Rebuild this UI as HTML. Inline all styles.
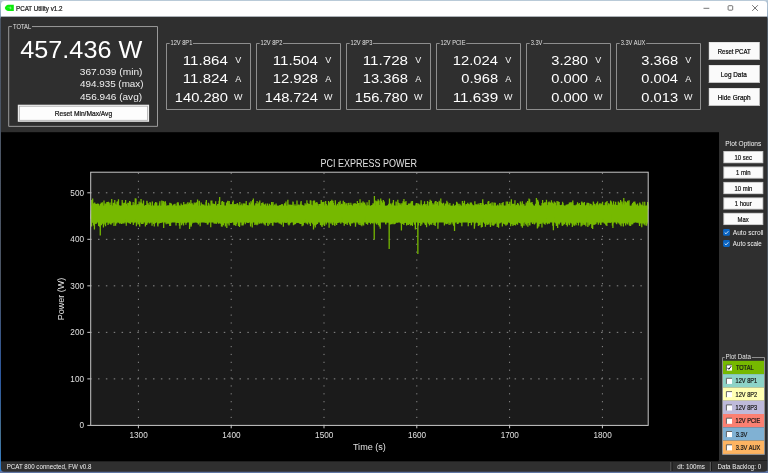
<!DOCTYPE html>
<html><head><meta charset="utf-8"><title>PCAT Utility v1.2</title>
<style>
*{box-sizing:border-box;margin:0;padding:0}
html,body{width:768px;height:473px;overflow:hidden;background:#2f2f2f}
svg{position:absolute;left:0;top:0;display:block;will-change:transform}
svg text{font-family:"Liberation Sans",sans-serif;white-space:pre}
</style></head><body>
<svg width="768" height="473" viewBox="0 0 768 473">
<defs><linearGradient id="dl" x1="0" y1="0" x2="0" y2="1"><stop offset="0" stop-color="#b4c6d6"/><stop offset="0.034" stop-color="#8aa4bc"/><stop offset="0.04" stop-color="#4c5666"/><stop offset="0.6" stop-color="#4a5464"/><stop offset="0.8" stop-color="#2c58a0"/><stop offset="0.92" stop-color="#46708e"/><stop offset="1" stop-color="#2b80dc"/></linearGradient><linearGradient id="dr" x1="0" y1="0" x2="0" y2="1"><stop offset="0" stop-color="#b4c6d6"/><stop offset="0.034" stop-color="#8aa4bc"/><stop offset="0.04" stop-color="#586470"/><stop offset="1" stop-color="#4c545e"/></linearGradient></defs>
<rect x="0" y="0" width="384" height="473" fill="url(#dl)"/>
<rect x="384" y="0" width="384" height="473" fill="url(#dr)"/>
<rect x="0" y="471" width="768" height="2" fill="#6076a4"/>
<rect x="0" y="0" width="768" height="1" fill="#b9cad8"/>
<path d="M1 16.5H767.1V468.7a3 3 0 0 1 -3 3H4a3 3 0 0 1 -3 -3Z" fill="#2f2f2f"/>
<path d="M1 16.5V4.5a3.5 3.5 0 0 1 3.5 -3.5H763.6a3.5 3.5 0 0 1 3.5 3.5V16.5Z" fill="#ffffff"/>
<path d="M7.9 4.8H13.8V11H7.9C6.3 10.7 5.2 9.6 4.8 8.1C5.1 6.7 6.3 5.4 7.9 4.8Z" fill="#0bea0b"/>
<ellipse cx="10.4" cy="7.9" rx="1.0" ry="1.3" fill="#8af58a" opacity="0.8" transform="rotate(-25 10.4 7.9)"/>
<ellipse cx="8.2" cy="7.3" rx="0.8" ry="0.5" fill="#6af06a" opacity="0.7"/>
<text transform="translate(16.00,10.90) scale(0.842,1)" font-size="7.4" fill="#222" stroke="#111" stroke-width="0.22">PCAT Utility v1.2</text>
<g stroke="#3a3a3a" stroke-width="0.7" fill="none"><path d="M703.5 8.3H709.3"/><rect x="728.1" y="5.7" width="4.6" height="4.5" rx="0.8"/><path d="M752.2 5.2L757.9 10.9M757.9 5.2L752.2 10.9"/></g>
<path d="M11.9 26.55H8.7V126.35H157.5V26.55H32.0" fill="none" stroke="#9a9a9a" stroke-width="1"/>
<text transform="translate(12.98,28.80) scale(0.769,1)" font-size="7.6" fill="#e2e2e2">TOTAL</text>
<text transform="translate(20.30,58.00) scale(1.051,1)" font-size="24" fill="#ffffff">457.436 W</text>
<text transform="translate(79.79,74.80) scale(1.058,1)" font-size="9.6" fill="#f0f0f0">367.039 (min)</text>
<text transform="translate(80.00,87.40) scale(1.028,1)" font-size="9.6" fill="#f0f0f0">494.935 (max)</text>
<text transform="translate(80.00,100.00) scale(1.049,1)" font-size="9.6" fill="#f0f0f0">456.946 (avg)</text>
<rect x="17.8" y="104.7" width="131.3" height="17.1" fill="#ececec"/>
<rect x="19.0" y="105.9" width="128.9" height="14.7" fill="#a6a6a6"/>
<rect x="19.7" y="106.6" width="127.5" height="13.3" fill="#fdfdfd"/>
<text transform="translate(54.77,116.00) scale(0.898,1)" font-size="7.4" fill="#111" stroke="#111" stroke-width="0.22">Reset Min/Max/Avg</text>
<path d="M169.7 43.5H166.5V109.5H250.5V43.5H193.0" fill="none" stroke="#8e8e8e" stroke-width="1"/>
<text transform="translate(170.47,45.10) scale(0.793,1)" font-size="7.2" fill="#e2e2e2">12V 8P1</text>
<text transform="translate(182.76,64.70) scale(1.138,1)" font-size="13.3" fill="#ffffff">11.864</text>
<text transform="translate(235.31,62.80) scale(1.000,1)" font-size="9.0" fill="#f4f4f4">V</text>
<text transform="translate(182.76,83.40) scale(1.138,1)" font-size="13.3" fill="#ffffff">11.824</text>
<text transform="translate(235.31,81.50) scale(1.000,1)" font-size="9.0" fill="#f4f4f4">A</text>
<text transform="translate(174.80,102.10) scale(1.107,1)" font-size="13.3" fill="#ffffff">140.280</text>
<text transform="translate(234.05,100.20) scale(1.000,1)" font-size="9.0" fill="#f4f4f4">W</text>
<path d="M259.7 43.5H256.5V109.5H340.5V43.5H283.0" fill="none" stroke="#8e8e8e" stroke-width="1"/>
<text transform="translate(260.47,45.10) scale(0.793,1)" font-size="7.2" fill="#e2e2e2">12V 8P2</text>
<text transform="translate(272.76,64.70) scale(1.138,1)" font-size="13.3" fill="#ffffff">11.504</text>
<text transform="translate(325.31,62.80) scale(1.000,1)" font-size="9.0" fill="#f4f4f4">V</text>
<text transform="translate(272.79,83.40) scale(1.113,1)" font-size="13.3" fill="#ffffff">12.928</text>
<text transform="translate(325.31,81.50) scale(1.000,1)" font-size="9.0" fill="#f4f4f4">A</text>
<text transform="translate(264.80,102.10) scale(1.105,1)" font-size="13.3" fill="#ffffff">148.724</text>
<text transform="translate(324.05,100.20) scale(1.000,1)" font-size="9.0" fill="#f4f4f4">W</text>
<path d="M349.7 43.5H346.5V109.5H430.5V43.5H373.0" fill="none" stroke="#8e8e8e" stroke-width="1"/>
<text transform="translate(350.47,45.10) scale(0.793,1)" font-size="7.2" fill="#e2e2e2">12V 8P3</text>
<text transform="translate(362.76,64.70) scale(1.142,1)" font-size="13.3" fill="#ffffff">11.728</text>
<text transform="translate(415.31,62.80) scale(1.000,1)" font-size="9.0" fill="#f4f4f4">V</text>
<text transform="translate(362.79,83.40) scale(1.113,1)" font-size="13.3" fill="#ffffff">13.368</text>
<text transform="translate(415.31,81.50) scale(1.000,1)" font-size="9.0" fill="#f4f4f4">A</text>
<text transform="translate(354.80,102.10) scale(1.107,1)" font-size="13.3" fill="#ffffff">156.780</text>
<text transform="translate(414.05,100.20) scale(1.000,1)" font-size="9.0" fill="#f4f4f4">W</text>
<path d="M439.7 43.5H436.5V109.5H520.5V43.5H466.2" fill="none" stroke="#8e8e8e" stroke-width="1"/>
<text transform="translate(440.47,45.10) scale(0.793,1)" font-size="7.2" fill="#e2e2e2">12V PCIE</text>
<text transform="translate(452.79,64.70) scale(1.109,1)" font-size="13.3" fill="#ffffff">12.024</text>
<text transform="translate(505.31,62.80) scale(1.000,1)" font-size="9.0" fill="#f4f4f4">V</text>
<text transform="translate(461.31,83.40) scale(1.106,1)" font-size="13.3" fill="#ffffff">0.968</text>
<text transform="translate(505.31,81.50) scale(1.000,1)" font-size="9.0" fill="#f4f4f4">A</text>
<text transform="translate(452.76,102.10) scale(1.144,1)" font-size="13.3" fill="#ffffff">11.639</text>
<text transform="translate(504.05,100.20) scale(1.000,1)" font-size="9.0" fill="#f4f4f4">W</text>
<path d="M529.7 43.5H526.5V109.5H610.5V43.5H543.3" fill="none" stroke="#8e8e8e" stroke-width="1"/>
<text transform="translate(530.67,45.10) scale(0.793,1)" font-size="7.2" fill="#e2e2e2">3.3V</text>
<text transform="translate(551.31,64.70) scale(1.104,1)" font-size="13.3" fill="#ffffff">3.280</text>
<text transform="translate(595.31,62.80) scale(1.000,1)" font-size="9.0" fill="#f4f4f4">V</text>
<text transform="translate(551.31,83.40) scale(1.104,1)" font-size="13.3" fill="#ffffff">0.000</text>
<text transform="translate(595.31,81.50) scale(1.000,1)" font-size="9.0" fill="#f4f4f4">A</text>
<text transform="translate(551.31,102.10) scale(1.104,1)" font-size="13.3" fill="#ffffff">0.000</text>
<text transform="translate(594.05,100.20) scale(1.000,1)" font-size="9.0" fill="#f4f4f4">W</text>
<path d="M619.7 43.5H616.5V109.5H700.5V43.5H646.2" fill="none" stroke="#8e8e8e" stroke-width="1"/>
<text transform="translate(620.67,45.10) scale(0.793,1)" font-size="7.2" fill="#e2e2e2">3.3V AUX</text>
<text transform="translate(641.31,64.70) scale(1.106,1)" font-size="13.3" fill="#ffffff">3.368</text>
<text transform="translate(685.31,62.80) scale(1.000,1)" font-size="9.0" fill="#f4f4f4">V</text>
<text transform="translate(641.31,83.40) scale(1.102,1)" font-size="13.3" fill="#ffffff">0.004</text>
<text transform="translate(685.31,81.50) scale(1.000,1)" font-size="9.0" fill="#f4f4f4">A</text>
<text transform="translate(641.31,102.10) scale(1.106,1)" font-size="13.3" fill="#ffffff">0.013</text>
<text transform="translate(684.05,100.20) scale(1.000,1)" font-size="9.0" fill="#f4f4f4">W</text>
<rect x="708.8" y="42" width="51" height="18" fill="#dedede"/>
<rect x="708.8" y="59" width="51" height="1" fill="#bcbcbc"/>
<rect x="709.6" y="42.8" width="49.4" height="16.3" fill="#fafafa"/>
<text transform="translate(717.72,54.00) scale(0.814,1)" font-size="7.4" fill="#000" stroke="#111" stroke-width="0.22">Reset PCAT</text>
<rect x="708.8" y="65" width="51" height="18" fill="#dedede"/>
<rect x="708.8" y="82" width="51" height="1" fill="#bcbcbc"/>
<rect x="709.6" y="65.8" width="49.4" height="16.3" fill="#fafafa"/>
<text transform="translate(720.79,77.20) scale(0.866,1)" font-size="7.4" fill="#000" stroke="#111" stroke-width="0.22">Log Data</text>
<rect x="708.8" y="88" width="51" height="18" fill="#dedede"/>
<rect x="708.8" y="105" width="51" height="1" fill="#bcbcbc"/>
<rect x="709.6" y="88.8" width="49.4" height="16.3" fill="#fafafa"/>
<text transform="translate(717.68,100.40) scale(0.873,1)" font-size="7.4" fill="#000" stroke="#111" stroke-width="0.22">Hide Graph</text>
<rect x="1" y="132.2" width="718.0" height="329.1" fill="#000000"/>
<rect x="90.7" y="172.2" width="557.5" height="253.2" fill="#1b1b1b"/>
<line x1="90.9" y1="378.88" x2="648.2" y2="378.88" stroke="#8c8c8c" stroke-width="1" stroke-dasharray="1.5 6.36" stroke-dashoffset="0.75"/>
<line x1="90.9" y1="332.36" x2="648.2" y2="332.36" stroke="#8c8c8c" stroke-width="1" stroke-dasharray="1.5 6.36" stroke-dashoffset="0.75"/>
<line x1="90.9" y1="285.84" x2="648.2" y2="285.84" stroke="#8c8c8c" stroke-width="1" stroke-dasharray="1.5 6.36" stroke-dashoffset="0.75"/>
<line x1="90.9" y1="239.32" x2="648.2" y2="239.32" stroke="#8c8c8c" stroke-width="1" stroke-dasharray="1.5 6.36" stroke-dashoffset="0.75"/>
<line x1="90.9" y1="192.80" x2="648.2" y2="192.80" stroke="#8c8c8c" stroke-width="1" stroke-dasharray="1.5 6.36" stroke-dashoffset="0.75"/>
<line x1="138.40" y1="425.29999999999995" x2="138.40" y2="172.2" stroke="#8c8c8c" stroke-width="1" stroke-dasharray="1.2 6.67" stroke-dashoffset="0.6"/>
<line x1="231.20" y1="425.29999999999995" x2="231.20" y2="172.2" stroke="#8c8c8c" stroke-width="1" stroke-dasharray="1.2 6.67" stroke-dashoffset="0.6"/>
<line x1="324.00" y1="425.29999999999995" x2="324.00" y2="172.2" stroke="#8c8c8c" stroke-width="1" stroke-dasharray="1.2 6.67" stroke-dashoffset="0.6"/>
<line x1="416.80" y1="425.29999999999995" x2="416.80" y2="172.2" stroke="#8c8c8c" stroke-width="1" stroke-dasharray="1.2 6.67" stroke-dashoffset="0.6"/>
<line x1="509.60" y1="425.29999999999995" x2="509.60" y2="172.2" stroke="#8c8c8c" stroke-width="1" stroke-dasharray="1.2 6.67" stroke-dashoffset="0.6"/>
<line x1="602.40" y1="425.29999999999995" x2="602.40" y2="172.2" stroke="#8c8c8c" stroke-width="1" stroke-dasharray="1.2 6.67" stroke-dashoffset="0.6"/>
<rect x="91" y="205.6" width="557" height="16.9" fill="#76b900"/>
<path d="M91.00 218.7L91.09 215.9L91.19 214.4L91.28 213.9L91.37 210.4L91.46 218.7L91.56 221.5L91.65 226.5L91.74 200.0L91.84 211.5L91.93 218.8L92.02 223.1L92.11 220.4L92.21 213.8L92.30 213.5L92.39 212.3L92.49 214.6L92.58 220.3L92.67 198.6L92.76 209.0L92.86 217.4L92.95 221.5L93.04 210.6L93.14 213.8L93.23 203.2L93.32 220.0L93.41 209.7L93.51 214.8L93.60 225.4L93.69 221.1L93.78 225.2L93.88 203.4L93.97 222.0L94.06 222.4L94.16 205.8L94.25 212.4L94.34 220.5L94.43 229.5L94.53 223.3L94.62 218.0L94.71 202.4L94.81 206.5L94.90 223.0L94.99 208.0L95.08 221.1L95.18 219.0L95.27 208.2L95.36 221.6L95.46 223.9L95.55 212.0L95.64 221.1L95.73 212.4L95.83 211.0L95.92 222.1L96.01 203.8L96.11 221.8L96.20 207.0L96.29 203.9L96.38 206.6L96.48 223.6L96.57 222.4L96.66 209.3L96.76 217.8L96.85 220.5L96.94 220.9L97.03 220.3L97.13 210.6L97.22 220.6L97.31 204.1L97.41 218.3L97.50 213.6L97.59 216.0L97.68 210.6L97.78 203.4L97.87 204.4L97.96 214.1L98.06 221.2L98.15 204.3L98.24 208.6L98.33 210.6L98.43 214.1L98.52 204.1L98.61 226.0L98.71 205.5L98.80 209.2L98.89 207.6L98.98 218.5L99.08 209.1L99.17 214.4L99.26 215.6L99.36 212.6L99.45 209.3L99.54 226.8L99.63 209.8L99.73 210.8L99.82 209.6L99.91 214.4L100.00 208.6L100.10 225.8L100.19 220.9L100.28 235.5L100.38 204.1L100.47 217.3L100.56 209.4L100.65 218.1L100.75 206.2L100.84 213.4L100.93 210.9L101.03 223.4L101.12 202.8L101.21 206.9L101.30 215.9L101.40 225.3L101.49 205.6L101.58 207.3L101.68 221.4L101.77 214.8L101.86 214.1L101.95 212.4L102.05 205.9L102.14 203.5L102.23 223.7L102.33 202.2L102.42 211.1L102.51 217.7L102.60 222.0L102.70 210.9L102.79 218.8L102.88 218.9L102.98 213.9L103.07 212.6L103.16 206.2L103.25 208.7L103.35 218.6L103.44 227.5L103.53 220.1L103.63 220.3L103.72 210.6L103.81 210.9L103.90 208.9L104.00 200.6L104.09 206.2L104.18 224.4L104.28 203.6L104.37 219.9L104.46 208.6L104.55 206.3L104.65 219.4L104.74 207.4L104.83 211.2L104.92 215.5L105.02 206.1L105.11 212.2L105.20 206.0L105.30 206.0L105.39 214.2L105.48 212.1L105.57 226.3L105.67 203.4L105.76 219.4L105.85 216.9L105.95 222.4L106.04 213.8L106.13 213.0L106.22 208.3L106.32 222.5L106.41 221.3L106.50 208.7L106.60 214.1L106.69 212.7L106.78 220.5L106.87 202.0L106.97 217.0L107.06 217.1L107.15 211.1L107.25 211.1L107.34 206.1L107.43 212.2L107.52 214.9L107.62 216.1L107.71 207.0L107.80 214.4L107.90 201.9L107.99 214.8L108.08 225.1L108.17 203.1L108.27 214.5L108.36 209.7L108.45 201.7L108.55 221.7L108.64 219.9L108.73 214.5L108.82 217.4L108.92 209.0L109.01 223.4L109.10 220.3L109.20 214.6L109.29 214.7L109.38 212.1L109.47 209.5L109.57 214.2L109.66 211.7L109.75 205.2L109.85 203.4L109.94 205.2L110.03 202.5L110.12 215.7L110.22 221.7L110.31 219.5L110.40 224.0L110.50 209.1L110.59 220.2L110.68 215.8L110.77 220.5L110.87 205.1L110.96 224.8L111.05 213.3L111.14 211.7L111.24 219.6L111.33 223.4L111.42 214.9L111.52 221.6L111.61 219.5L111.70 199.0L111.79 203.4L111.89 203.0L111.98 214.2L112.07 216.0L112.17 215.6L112.26 223.2L112.35 208.3L112.44 215.6L112.54 209.2L112.63 220.3L112.72 209.1L112.82 206.4L112.91 207.2L113.00 217.7L113.09 216.8L113.19 206.8L113.28 216.2L113.37 209.0L113.47 209.9L113.56 202.7L113.65 208.8L113.74 218.9L113.84 206.9L113.93 213.4L114.02 226.1L114.12 208.5L114.21 216.8L114.30 218.1L114.39 212.1L114.49 217.0L114.58 204.2L114.67 210.0L114.77 200.1L114.86 207.8L114.95 219.4L115.04 219.9L115.14 215.1L115.23 203.6L115.32 217.5L115.42 212.2L115.51 204.7L115.60 225.7L115.69 211.3L115.79 204.5L115.88 222.3L115.97 213.4L116.06 206.6L116.16 213.6L116.25 214.4L116.34 219.4L116.44 211.5L116.53 209.3L116.62 216.6L116.71 223.6L116.81 221.1L116.90 206.6L116.99 202.4L117.09 201.8L117.18 221.3L117.27 215.2L117.36 202.8L117.46 201.4L117.55 213.8L117.64 205.4L117.74 209.1L117.83 212.7L117.92 217.9L118.01 221.1L118.11 215.8L118.20 220.7L118.29 214.6L118.39 211.2L118.48 199.3L118.57 220.3L118.66 219.5L118.76 212.8L118.85 217.0L118.94 209.1L119.04 213.6L119.13 222.9L119.22 214.8L119.31 205.6L119.41 222.3L119.50 214.6L119.59 208.8L119.69 221.6L119.78 223.8L119.87 212.8L119.96 217.7L120.06 216.8L120.15 207.6L120.24 222.6L120.34 209.0L120.43 222.3L120.52 215.4L120.61 212.9L120.71 208.3L120.80 212.5L120.89 206.2L120.99 217.4L121.08 221.9L121.17 223.4L121.26 215.0L121.36 217.7L121.45 206.1L121.54 209.3L121.64 223.9L121.73 206.2L121.82 217.2L121.91 207.0L122.01 214.2L122.10 209.9L122.19 200.1L122.28 216.5L122.38 207.3L122.47 214.1L122.56 202.6L122.66 217.5L122.75 217.8L122.84 214.5L122.93 223.5L123.03 214.0L123.12 207.1L123.21 208.2L123.31 205.1L123.40 212.7L123.49 217.2L123.58 212.2L123.68 204.4L123.77 206.1L123.86 220.0L123.96 203.0L124.05 223.5L124.14 208.8L124.23 210.1L124.33 206.2L124.42 212.8L124.51 219.1L124.61 204.1L124.70 214.7L124.79 209.7L124.88 219.7L124.98 208.1L125.07 210.0L125.16 202.3L125.26 213.5L125.35 213.8L125.44 218.7L125.53 213.3L125.63 200.0L125.72 215.6L125.81 214.0L125.91 217.5L126.00 217.9L126.09 224.1L126.18 223.4L126.28 225.8L126.37 203.7L126.46 222.9L126.56 219.0L126.65 219.9L126.74 222.2L126.83 220.8L126.93 206.6L127.02 221.1L127.11 215.0L127.20 215.6L127.30 219.8L127.39 210.3L127.48 220.3L127.58 220.2L127.67 217.2L127.76 214.4L127.85 202.7L127.95 210.0L128.04 213.8L128.13 215.5L128.23 214.1L128.32 220.2L128.41 217.4L128.50 208.0L128.60 202.8L128.69 219.8L128.78 207.7L128.88 223.0L128.97 209.7L129.06 223.2L129.15 219.4L129.25 218.7L129.34 210.6L129.43 206.7L129.53 212.1L129.62 201.1L129.71 218.0L129.80 213.7L129.90 206.3L129.99 218.0L130.08 217.1L130.18 214.6L130.27 211.1L130.36 224.0L130.45 201.7L130.55 206.3L130.64 216.5L130.73 208.6L130.83 211.9L130.92 220.9L131.01 220.2L131.10 211.4L131.20 210.8L131.29 219.0L131.38 208.1L131.48 218.0L131.57 214.3L131.66 206.5L131.75 218.5L131.85 205.3L131.94 222.0L132.03 209.9L132.13 216.9L132.22 206.7L132.31 220.1L132.40 219.7L132.50 221.6L132.59 206.2L132.68 209.2L132.78 206.7L132.87 219.0L132.96 213.5L133.05 208.8L133.15 202.0L133.24 213.9L133.33 225.1L133.42 208.6L133.52 224.0L133.61 205.4L133.70 207.1L133.80 208.3L133.89 206.2L133.98 214.0L134.07 222.8L134.17 218.7L134.26 208.0L134.35 204.7L134.45 210.4L134.54 218.4L134.63 212.4L134.72 205.6L134.82 217.6L134.91 202.7L135.00 219.6L135.10 213.5L135.19 212.5L135.28 198.2L135.37 207.2L135.47 206.8L135.56 217.1L135.65 212.7L135.75 205.1L135.84 220.7L135.93 221.5L136.02 198.5L136.12 211.0L136.21 205.5L136.30 219.1L136.40 226.2L136.49 221.3L136.58 215.8L136.67 210.9L136.77 216.7L136.86 213.4L136.95 221.4L137.05 206.6L137.14 207.4L137.23 216.5L137.32 207.8L137.42 207.7L137.51 204.7L137.60 204.7L137.70 216.6L137.79 210.1L137.88 214.3L137.97 213.6L138.07 224.4L138.16 205.9L138.25 213.2L138.34 208.8L138.44 220.6L138.53 224.1L138.62 215.1L138.72 224.3L138.81 221.6L138.90 219.0L138.99 222.3L139.09 201.5L139.18 205.9L139.27 214.8L139.37 209.3L139.46 211.3L139.55 207.5L139.64 226.6L139.74 225.8L139.83 219.7L139.92 221.6L140.02 203.9L140.11 218.5L140.20 211.1L140.29 204.5L140.39 222.3L140.48 202.8L140.57 213.7L140.67 202.5L140.76 203.4L140.85 213.2L140.94 212.2L141.04 198.9L141.13 221.0L141.22 206.0L141.32 221.1L141.41 215.7L141.50 202.5L141.59 223.9L141.69 207.2L141.78 223.7L141.87 220.8L141.97 217.4L142.06 220.4L142.15 204.1L142.24 218.5L142.34 214.9L142.43 221.0L142.52 205.5L142.62 219.0L142.71 203.4L142.80 217.2L142.89 224.1L142.99 211.6L143.08 205.3L143.17 223.4L143.27 216.0L143.36 219.6L143.45 205.0L143.54 200.5L143.64 207.5L143.73 214.0L143.82 221.6L143.91 213.4L144.01 211.4L144.10 209.5L144.19 206.0L144.29 214.2L144.38 221.4L144.47 205.9L144.56 217.1L144.66 214.3L144.75 210.4L144.84 220.8L144.94 211.6L145.03 211.0L145.12 208.1L145.21 211.0L145.31 222.2L145.40 226.4L145.49 214.8L145.59 218.6L145.68 205.1L145.77 215.3L145.86 220.3L145.96 221.6L146.05 217.1L146.14 212.3L146.24 211.8L146.33 222.2L146.42 220.1L146.51 222.4L146.61 210.5L146.70 224.9L146.79 218.8L146.89 200.8L146.98 207.1L147.07 201.3L147.16 206.3L147.26 223.5L147.35 217.4L147.44 216.5L147.54 221.0L147.63 220.6L147.72 208.4L147.81 219.6L147.91 216.8L148.00 212.7L148.09 217.9L148.19 203.2L148.28 216.0L148.37 208.5L148.46 208.5L148.56 208.8L148.65 216.5L148.74 214.8L148.84 208.8L148.93 220.6L149.02 211.4L149.11 220.6L149.21 212.9L149.30 223.6L149.39 207.5L149.49 204.9L149.58 221.2L149.67 210.2L149.76 223.1L149.86 220.8L149.95 202.1L150.04 208.9L150.13 219.4L150.23 205.9L150.32 205.9L150.41 202.7L150.51 215.9L150.60 221.5L150.69 208.6L150.78 211.2L150.88 218.7L150.97 222.2L151.06 221.8L151.16 219.9L151.25 220.5L151.34 209.1L151.43 206.7L151.53 220.9L151.62 207.2L151.71 218.6L151.81 217.1L151.90 218.9L151.99 222.6L152.08 225.8L152.18 208.5L152.27 203.7L152.36 201.4L152.46 220.9L152.55 206.0L152.64 205.0L152.73 219.9L152.83 215.7L152.92 215.7L153.01 218.9L153.11 221.1L153.20 216.8L153.29 209.6L153.38 217.8L153.48 214.3L153.57 223.9L153.66 213.8L153.76 207.1L153.85 216.3L153.94 223.8L154.03 213.2L154.13 213.3L154.22 218.7L154.31 226.5L154.41 208.7L154.50 219.4L154.59 215.3L154.68 209.1L154.78 212.3L154.87 203.3L154.96 213.5L155.06 216.8L155.15 205.3L155.24 208.2L155.33 220.9L155.43 223.3L155.52 216.7L155.61 202.1L155.70 218.5L155.80 209.5L155.89 212.4L155.98 215.7L156.08 207.9L156.17 214.2L156.26 207.9L156.35 203.9L156.45 203.3L156.54 218.3L156.63 212.3L156.73 202.6L156.82 211.8L156.91 215.4L157.00 219.0L157.10 209.3L157.19 219.4L157.28 216.4L157.38 219.7L157.47 222.4L157.56 208.5L157.65 225.4L157.75 212.9L157.84 218.4L157.93 226.4L158.03 222.5L158.12 216.1L158.21 208.7L158.30 214.3L158.40 217.0L158.49 209.9L158.58 214.7L158.68 209.3L158.77 205.8L158.86 217.2L158.95 209.6L159.05 223.1L159.14 206.8L159.23 223.6L159.33 211.7L159.42 214.5L159.51 203.2L159.60 208.8L159.70 220.5L159.79 207.9L159.88 201.2L159.98 222.9L160.07 214.4L160.16 217.6L160.25 205.9L160.35 217.3L160.44 210.3L160.53 221.4L160.62 212.5L160.72 222.4L160.81 217.2L160.90 216.2L161.00 212.5L161.09 223.1L161.18 210.3L161.27 216.4L161.37 221.4L161.46 218.7L161.55 219.7L161.65 216.1L161.74 222.0L161.83 200.4L161.92 218.6L162.02 217.1L162.11 207.2L162.20 212.0L162.30 211.1L162.39 204.8L162.48 203.2L162.57 206.1L162.67 208.3L162.76 220.5L162.85 220.4L162.95 207.0L163.04 218.0L163.13 220.0L163.22 200.9L163.32 206.4L163.41 207.2L163.50 208.7L163.60 205.6L163.69 228.1L163.78 205.9L163.87 217.3L163.97 201.8L164.06 219.2L164.15 217.9L164.25 204.5L164.34 217.7L164.43 219.8L164.52 204.8L164.62 216.4L164.71 207.3L164.80 209.3L164.90 209.1L164.99 220.6L165.08 217.1L165.17 213.3L165.27 216.7L165.36 201.2L165.45 218.8L165.55 209.0L165.64 220.2L165.73 203.3L165.82 222.3L165.92 219.0L166.01 220.7L166.10 221.7L166.19 224.2L166.29 216.7L166.38 212.5L166.47 218.0L166.57 208.0L166.66 213.1L166.75 214.3L166.84 206.4L166.94 212.0L167.03 214.5L167.12 215.7L167.22 209.3L167.31 210.5L167.40 214.1L167.49 215.2L167.59 223.8L167.68 211.0L167.77 217.8L167.87 206.2L167.96 205.4L168.05 219.6L168.14 219.6L168.24 208.6L168.33 209.9L168.42 213.1L168.52 223.7L168.61 205.6L168.70 208.1L168.79 218.3L168.89 221.2L168.98 218.9L169.07 212.9L169.17 208.5L169.26 206.7L169.35 205.3L169.44 206.9L169.54 205.8L169.63 220.9L169.72 226.1L169.82 202.8L169.91 221.2L170.00 203.9L170.09 210.3L170.19 203.0L170.28 222.8L170.37 211.3L170.47 221.3L170.56 226.1L170.65 218.2L170.74 215.9L170.84 211.6L170.93 223.0L171.02 210.2L171.12 221.9L171.21 205.1L171.30 221.5L171.39 203.6L171.49 219.6L171.58 218.7L171.67 210.0L171.76 214.3L171.86 216.3L171.95 211.7L172.04 209.6L172.14 220.8L172.23 205.9L172.32 216.5L172.41 216.8L172.51 206.3L172.60 209.1L172.69 212.8L172.79 217.6L172.88 213.3L172.97 209.6L173.06 209.6L173.16 219.7L173.25 204.7L173.34 215.0L173.44 204.8L173.53 214.6L173.62 221.8L173.71 217.1L173.81 216.8L173.90 219.9L173.99 204.2L174.09 210.7L174.18 215.6L174.27 215.9L174.36 213.8L174.46 206.1L174.55 205.4L174.64 207.9L174.74 208.3L174.83 214.4L174.92 216.5L175.01 203.7L175.11 220.7L175.20 215.1L175.29 207.1L175.39 209.6L175.48 210.8L175.57 208.0L175.66 208.2L175.76 215.2L175.85 221.3L175.94 208.3L176.04 225.6L176.13 210.8L176.22 221.8L176.31 214.9L176.41 222.8L176.50 223.1L176.59 214.2L176.69 215.9L176.78 214.1L176.87 214.1L176.96 215.9L177.06 221.4L177.15 202.8L177.24 208.7L177.33 218.6L177.43 205.7L177.52 214.3L177.61 206.3L177.71 208.5L177.80 213.9L177.89 222.8L177.98 202.0L178.08 210.0L178.17 215.9L178.26 223.0L178.36 203.2L178.45 220.2L178.54 204.7L178.63 205.6L178.73 205.4L178.82 216.8L178.91 215.8L179.01 218.5L179.10 215.7L179.19 215.6L179.28 205.8L179.38 225.7L179.47 216.2L179.56 218.2L179.66 216.5L179.75 213.5L179.84 210.6L179.93 228.7L180.03 221.7L180.12 209.6L180.21 211.8L180.31 217.3L180.40 209.0L180.49 220.0L180.58 207.8L180.68 222.2L180.77 217.8L180.86 210.4L180.96 213.9L181.05 218.6L181.14 203.4L181.23 206.9L181.33 204.9L181.42 207.5L181.51 208.1L181.61 225.3L181.70 205.7L181.79 205.9L181.88 207.2L181.98 208.5L182.07 215.2L182.16 205.2L182.26 223.4L182.35 210.3L182.44 215.0L182.53 215.6L182.63 217.1L182.72 207.4L182.81 205.6L182.91 210.7L183.00 222.3L183.09 215.3L183.18 204.8L183.28 222.0L183.37 204.7L183.46 220.4L183.55 225.5L183.65 217.1L183.74 201.9L183.83 214.4L183.93 209.1L184.02 222.4L184.11 212.8L184.20 220.8L184.30 215.9L184.39 213.4L184.48 212.1L184.58 207.5L184.67 211.9L184.76 204.2L184.85 216.8L184.95 219.1L185.04 221.5L185.13 222.4L185.23 210.4L185.32 216.9L185.41 204.6L185.50 206.5L185.60 218.9L185.69 206.5L185.78 204.7L185.88 224.7L185.97 214.8L186.06 214.4L186.15 203.7L186.25 203.9L186.34 217.8L186.43 222.8L186.53 222.6L186.62 211.2L186.71 206.1L186.80 212.4L186.90 205.0L186.99 216.2L187.08 221.2L187.18 216.7L187.27 218.7L187.36 218.1L187.45 212.8L187.55 218.9L187.64 211.8L187.73 203.1L187.83 202.3L187.92 214.1L188.01 213.6L188.10 207.0L188.20 220.5L188.29 221.7L188.38 207.8L188.47 221.3L188.57 207.8L188.66 206.1L188.75 217.0L188.85 218.6L188.94 204.0L189.03 206.2L189.12 220.6L189.22 207.8L189.31 213.8L189.40 202.5L189.50 222.1L189.59 229.0L189.68 211.8L189.77 205.1L189.87 225.3L189.96 211.9L190.05 214.6L190.15 212.5L190.24 212.5L190.33 211.8L190.42 211.1L190.52 203.9L190.61 218.4L190.70 218.5L190.80 207.3L190.89 200.0L190.98 205.5L191.07 226.8L191.17 209.2L191.26 214.4L191.35 225.7L191.45 212.6L191.54 222.3L191.63 204.8L191.72 224.1L191.82 207.0L191.91 213.9L192.00 207.7L192.10 223.2L192.19 203.3L192.28 216.1L192.37 217.4L192.47 207.2L192.56 220.9L192.65 218.4L192.75 211.0L192.84 204.6L192.93 219.9L193.02 212.8L193.12 207.9L193.21 208.8L193.30 220.3L193.40 205.3L193.49 220.4L193.58 215.7L193.67 210.0L193.77 215.7L193.86 222.8L193.95 221.3L194.05 213.5L194.14 216.8L194.23 202.4L194.32 221.8L194.42 206.7L194.51 208.8L194.60 216.8L194.69 205.6L194.79 213.9L194.88 213.8L194.97 212.2L195.07 219.7L195.16 216.5L195.25 207.3L195.34 216.1L195.44 209.2L195.53 203.2L195.62 208.5L195.72 205.7L195.81 219.3L195.90 215.2L195.99 202.6L196.09 222.3L196.18 221.9L196.27 217.4L196.37 212.0L196.46 215.6L196.55 214.3L196.64 202.3L196.74 222.3L196.83 217.5L196.92 217.8L197.02 222.3L197.11 215.9L197.20 204.8L197.29 211.6L197.39 207.0L197.48 203.3L197.57 199.6L197.67 215.2L197.76 222.9L197.85 207.2L197.94 218.6L198.04 206.7L198.13 214.8L198.22 222.4L198.32 224.5L198.41 218.3L198.50 212.4L198.59 209.1L198.69 220.1L198.78 208.5L198.87 217.5L198.97 217.8L199.06 203.8L199.15 201.1L199.24 203.8L199.34 200.7L199.43 216.7L199.52 216.7L199.62 209.0L199.71 214.4L199.80 223.2L199.89 213.8L199.99 211.5L200.08 217.3L200.17 226.2L200.26 211.8L200.36 211.4L200.45 213.4L200.54 217.2L200.64 222.4L200.73 211.8L200.82 217.7L200.91 205.7L201.01 205.9L201.10 215.6L201.19 202.4L201.29 215.3L201.38 205.7L201.47 214.1L201.56 218.8L201.66 204.3L201.75 209.3L201.84 208.5L201.94 209.5L202.03 205.2L202.12 214.7L202.21 218.8L202.31 213.4L202.40 216.3L202.49 206.9L202.59 204.3L202.68 210.3L202.77 218.3L202.86 218.2L202.96 221.6L203.05 205.8L203.14 208.5L203.24 221.1L203.33 204.9L203.42 208.6L203.51 209.3L203.61 214.7L203.70 216.3L203.79 220.7L203.89 206.5L203.98 204.5L204.07 210.9L204.16 218.7L204.26 222.3L204.35 206.0L204.44 213.4L204.54 220.1L204.63 207.1L204.72 210.8L204.81 217.7L204.91 211.4L205.00 222.3L205.09 215.9L205.19 208.0L205.28 210.4L205.37 219.6L205.46 222.8L205.56 221.4L205.65 211.2L205.74 216.6L205.83 213.3L205.93 201.8L206.02 207.9L206.11 210.3L206.21 204.7L206.30 204.5L206.39 200.0L206.48 211.6L206.58 220.3L206.67 222.8L206.76 209.1L206.86 209.8L206.95 207.2L207.04 210.9L207.13 221.7L207.23 210.1L207.32 224.6L207.41 223.4L207.51 211.9L207.60 224.1L207.69 206.9L207.78 217.4L207.88 213.3L207.97 223.9L208.06 224.4L208.16 213.3L208.25 215.9L208.34 210.4L208.43 202.7L208.53 215.2L208.62 203.6L208.71 222.4L208.81 204.0L208.90 215.0L208.99 203.8L209.08 218.1L209.18 217.6L209.27 218.5L209.36 216.8L209.46 212.1L209.55 206.5L209.64 218.5L209.73 213.8L209.83 212.0L209.92 210.3L210.01 217.2L210.11 220.9L210.20 205.8L210.29 210.6L210.38 215.7L210.48 208.6L210.57 210.9L210.66 209.0L210.75 227.2L210.85 217.2L210.94 210.6L211.03 200.5L211.13 219.7L211.22 212.0L211.31 205.3L211.40 213.1L211.50 208.5L211.59 215.0L211.68 219.7L211.78 214.9L211.87 200.4L211.96 214.8L212.05 207.0L212.15 212.5L212.24 214.1L212.33 210.7L212.43 205.6L212.52 208.0L212.61 213.7L212.70 212.3L212.80 210.3L212.89 203.5L212.98 216.7L213.08 218.7L213.17 210.6L213.26 219.6L213.35 220.1L213.45 222.2L213.54 216.9L213.63 218.6L213.73 203.8L213.82 221.3L213.91 219.1L214.00 206.4L214.10 221.8L214.19 223.8L214.28 205.5L214.38 210.0L214.47 211.1L214.56 216.4L214.65 214.9L214.75 204.6L214.84 216.4L214.93 223.3L215.03 220.5L215.12 203.9L215.21 219.0L215.30 205.4L215.40 204.8L215.49 217.8L215.58 208.0L215.68 201.2L215.77 220.5L215.86 207.6L215.95 223.8L216.05 206.5L216.14 213.3L216.23 224.1L216.32 214.1L216.42 205.7L216.51 222.9L216.60 208.9L216.70 221.1L216.79 206.3L216.88 219.0L216.97 211.8L217.07 217.7L217.16 217.0L217.25 217.2L217.35 211.3L217.44 215.8L217.53 211.7L217.62 214.8L217.72 204.1L217.81 212.4L217.90 216.0L218.00 217.2L218.09 212.7L218.18 216.2L218.27 205.4L218.37 218.0L218.46 223.7L218.55 208.0L218.65 221.5L218.74 203.7L218.83 211.8L218.92 209.9L219.02 211.8L219.11 200.7L219.20 206.2L219.30 222.9L219.39 207.3L219.48 214.6L219.57 209.5L219.67 197.1L219.76 221.5L219.85 223.5L219.95 220.4L220.04 210.2L220.13 208.4L220.22 212.5L220.32 214.9L220.41 205.2L220.50 215.9L220.60 213.9L220.69 208.4L220.78 223.7L220.87 217.1L220.97 222.9L221.06 205.0L221.15 210.0L221.25 217.2L221.34 207.0L221.43 226.6L221.52 223.6L221.62 221.2L221.71 222.9L221.80 201.4L221.90 217.7L221.99 216.9L222.08 213.9L222.17 226.7L222.27 214.8L222.36 216.6L222.45 207.8L222.54 200.9L222.64 220.1L222.73 205.3L222.82 222.6L222.92 216.9L223.01 207.5L223.10 214.9L223.19 213.0L223.29 211.6L223.38 225.3L223.47 212.7L223.57 218.1L223.66 215.4L223.75 215.7L223.84 202.1L223.94 222.9L224.03 207.6L224.12 212.0L224.22 207.2L224.31 222.6L224.40 220.8L224.49 212.7L224.59 210.3L224.68 207.8L224.77 206.9L224.87 221.1L224.96 223.6L225.05 205.7L225.14 223.1L225.24 209.3L225.33 226.4L225.42 222.4L225.52 220.9L225.61 220.9L225.70 221.8L225.79 213.5L225.89 211.2L225.98 215.0L226.07 222.3L226.17 210.3L226.26 222.8L226.35 206.5L226.44 213.6L226.54 202.4L226.63 207.4L226.72 217.5L226.82 227.9L226.91 219.2L227.00 204.0L227.09 207.9L227.19 216.5L227.28 205.5L227.37 203.7L227.47 206.9L227.56 212.5L227.65 201.2L227.74 206.3L227.84 200.8L227.93 205.6L228.02 223.5L228.11 220.3L228.21 204.7L228.30 217.4L228.39 218.5L228.49 215.5L228.58 204.0L228.67 216.6L228.76 207.8L228.86 216.7L228.95 212.3L229.04 224.6L229.14 225.4L229.23 201.1L229.32 207.6L229.41 218.2L229.51 214.6L229.60 207.6L229.69 216.1L229.79 215.9L229.88 211.0L229.97 220.6L230.06 205.9L230.16 211.2L230.25 219.1L230.34 220.1L230.44 211.0L230.53 204.3L230.62 222.9L230.71 214.1L230.81 207.3L230.90 207.8L230.99 214.2L231.09 222.3L231.18 218.4L231.27 223.0L231.36 211.0L231.46 204.3L231.55 214.9L231.64 206.4L231.74 207.4L231.83 206.3L231.92 208.0L232.01 207.6L232.11 210.8L232.20 214.0L232.29 220.7L232.39 214.7L232.48 221.5L232.57 207.5L232.66 202.1L232.76 216.1L232.85 212.7L232.94 206.0L233.03 215.6L233.13 215.4L233.22 200.5L233.31 222.3L233.41 208.9L233.50 214.3L233.59 211.0L233.68 220.2L233.78 215.4L233.87 225.3L233.96 205.9L234.06 221.5L234.15 204.8L234.24 210.3L234.33 222.4L234.43 222.6L234.52 204.3L234.61 206.3L234.71 219.5L234.80 213.5L234.89 204.2L234.98 224.9L235.08 212.8L235.17 203.9L235.26 220.5L235.36 204.6L235.45 204.7L235.54 209.7L235.63 204.3L235.73 214.0L235.82 226.1L235.91 206.7L236.01 220.7L236.10 221.5L236.19 208.0L236.28 217.1L236.38 209.4L236.47 224.2L236.56 220.8L236.66 210.4L236.75 211.5L236.84 219.3L236.93 203.7L237.03 209.6L237.12 213.9L237.21 213.3L237.31 203.1L237.40 210.6L237.49 217.9L237.58 209.2L237.68 219.1L237.77 203.8L237.86 208.5L237.96 211.9L238.05 219.4L238.14 206.0L238.23 204.7L238.33 220.3L238.42 224.2L238.51 225.9L238.60 218.9L238.70 206.5L238.79 218.1L238.88 218.0L238.98 215.7L239.07 220.9L239.16 209.8L239.25 222.0L239.35 218.9L239.44 209.6L239.53 226.9L239.63 216.8L239.72 225.5L239.81 202.1L239.90 213.2L240.00 213.7L240.09 221.6L240.18 213.0L240.28 220.8L240.37 220.1L240.46 206.2L240.55 205.3L240.65 209.1L240.74 209.1L240.83 208.4L240.93 213.4L241.02 213.8L241.11 214.9L241.20 206.7L241.30 222.2L241.39 221.0L241.48 213.6L241.58 217.3L241.67 217.9L241.76 209.1L241.85 203.4L241.95 225.5L242.04 205.2L242.13 223.5L242.23 208.1L242.32 211.8L242.41 218.9L242.50 214.5L242.60 219.4L242.69 220.8L242.78 209.4L242.88 220.9L242.97 216.5L243.06 218.7L243.15 225.5L243.25 205.9L243.34 224.2L243.43 221.3L243.53 203.4L243.62 205.4L243.71 216.6L243.80 221.1L243.90 209.8L243.99 217.0L244.08 215.8L244.18 215.7L244.27 220.2L244.36 211.6L244.45 215.6L244.55 215.9L244.64 215.0L244.73 203.4L244.82 218.0L244.92 216.8L245.01 210.5L245.10 206.8L245.20 221.5L245.29 224.2L245.38 209.9L245.47 205.9L245.57 217.0L245.66 207.6L245.75 216.2L245.85 220.2L245.94 218.2L246.03 204.2L246.12 204.5L246.22 200.9L246.31 214.9L246.40 205.5L246.50 213.6L246.59 206.5L246.68 205.8L246.77 206.0L246.87 218.3L246.96 222.2L247.05 209.1L247.15 205.0L247.24 207.7L247.33 217.0L247.42 222.8L247.52 217.4L247.61 212.6L247.70 215.3L247.80 216.9L247.89 214.8L247.98 222.4L248.07 218.3L248.17 223.1L248.26 209.9L248.35 216.1L248.45 215.2L248.54 222.5L248.63 209.3L248.72 217.8L248.82 211.4L248.91 206.1L249.00 205.1L249.10 217.3L249.19 214.9L249.28 207.5L249.37 202.4L249.47 209.9L249.56 210.8L249.65 214.4L249.75 215.2L249.84 212.5L249.93 221.4L250.02 210.5L250.12 217.6L250.21 219.8L250.30 205.8L250.39 220.9L250.49 223.7L250.58 226.4L250.67 204.3L250.77 214.0L250.86 213.9L250.95 201.3L251.04 223.4L251.14 209.1L251.23 223.2L251.32 212.4L251.42 218.8L251.51 206.5L251.60 203.7L251.69 220.4L251.79 216.1L251.88 219.0L251.97 202.7L252.07 222.3L252.16 220.4L252.25 227.5L252.34 219.2L252.44 201.2L252.53 214.7L252.62 199.9L252.72 211.9L252.81 207.0L252.90 213.6L252.99 207.5L253.09 218.1L253.18 203.8L253.27 219.2L253.37 198.5L253.46 201.9L253.55 209.5L253.64 209.2L253.74 204.6L253.83 205.3L253.92 208.2L254.02 209.1L254.11 218.4L254.20 211.1L254.29 219.0L254.39 206.6L254.48 206.8L254.57 208.0L254.67 214.3L254.76 210.4L254.85 224.9L254.94 215.7L255.04 218.3L255.13 216.8L255.22 213.6L255.31 222.4L255.41 210.3L255.50 212.0L255.59 221.7L255.69 207.1L255.78 203.3L255.87 212.5L255.96 205.4L256.06 204.4L256.15 224.5L256.24 213.5L256.34 214.0L256.43 212.9L256.52 210.6L256.61 205.8L256.71 209.5L256.80 206.6L256.89 214.8L256.99 225.2L257.08 200.9L257.17 216.3L257.26 219.5L257.36 218.6L257.45 210.7L257.54 214.6L257.64 204.5L257.73 221.7L257.82 224.6L257.91 216.6L258.01 214.7L258.10 213.2L258.19 220.8L258.29 217.6L258.38 204.0L258.47 212.3L258.56 210.3L258.66 221.2L258.75 203.5L258.84 202.4L258.94 213.1L259.03 211.6L259.12 203.7L259.21 213.9L259.31 210.6L259.40 223.8L259.49 221.1L259.59 219.3L259.68 210.9L259.77 200.4L259.86 204.3L259.96 218.6L260.05 212.4L260.14 219.1L260.24 219.1L260.33 208.7L260.42 207.0L260.51 220.6L260.61 215.9L260.70 211.7L260.79 223.3L260.88 210.3L260.98 223.4L261.07 209.1L261.16 209.1L261.26 213.8L261.35 217.3L261.44 216.9L261.53 208.6L261.63 216.4L261.72 203.1L261.81 205.3L261.91 223.6L262.00 218.5L262.09 210.0L262.18 203.7L262.28 218.4L262.37 219.1L262.46 214.9L262.56 214.8L262.65 206.7L262.74 212.4L262.83 210.8L262.93 202.3L263.02 218.5L263.11 207.8L263.21 221.9L263.30 216.9L263.39 204.9L263.48 210.8L263.58 203.8L263.67 223.3L263.76 204.5L263.86 215.2L263.95 219.2L264.04 217.1L264.13 224.4L264.23 210.8L264.32 205.9L264.41 218.2L264.51 217.2L264.60 204.5L264.69 212.6L264.78 205.9L264.88 220.6L264.97 221.8L265.06 212.1L265.16 223.4L265.25 225.5L265.34 218.5L265.43 206.5L265.53 214.8L265.62 208.6L265.71 203.6L265.81 221.7L265.90 221.9L265.99 216.5L266.08 222.8L266.18 222.5L266.27 213.6L266.36 209.0L266.46 222.0L266.55 212.7L266.64 222.0L266.73 208.8L266.83 210.6L266.92 208.1L267.01 206.3L267.10 221.7L267.20 213.2L267.29 217.2L267.38 211.6L267.48 211.6L267.57 203.6L267.66 211.6L267.75 225.4L267.85 217.7L267.94 222.1L268.03 214.7L268.13 226.0L268.22 206.4L268.31 207.6L268.40 222.9L268.50 208.9L268.59 222.3L268.68 213.5L268.78 222.5L268.87 212.8L268.96 208.3L269.05 206.4L269.15 218.9L269.24 208.3L269.33 212.0L269.43 222.9L269.52 203.8L269.61 204.9L269.70 224.4L269.80 216.0L269.89 217.6L269.98 219.6L270.08 206.6L270.17 205.0L270.26 211.5L270.35 222.4L270.45 210.8L270.54 219.7L270.63 208.7L270.73 216.9L270.82 206.9L270.91 214.5L271.00 219.7L271.10 210.6L271.19 222.9L271.28 211.0L271.38 206.4L271.47 221.4L271.56 218.1L271.65 202.1L271.75 206.0L271.84 208.7L271.93 212.7L272.02 219.3L272.12 217.4L272.21 208.3L272.30 222.0L272.40 225.4L272.49 204.2L272.58 215.1L272.67 212.6L272.77 211.8L272.86 220.3L272.95 225.7L273.05 202.0L273.14 220.2L273.23 215.6L273.32 220.5L273.42 220.4L273.51 218.1L273.60 221.7L273.70 211.7L273.79 208.8L273.88 213.4L273.97 217.7L274.07 214.8L274.16 209.6L274.25 208.9L274.35 212.8L274.44 208.0L274.53 213.2L274.62 208.5L274.72 204.6L274.81 209.2L274.90 210.6L275.00 215.8L275.09 211.3L275.18 211.2L275.27 217.2L275.37 210.3L275.46 214.1L275.55 210.6L275.65 209.9L275.74 213.6L275.83 211.7L275.92 222.8L276.02 221.1L276.11 203.5L276.20 218.1L276.30 212.3L276.39 205.5L276.48 220.3L276.57 215.3L276.67 211.6L276.76 216.4L276.85 214.2L276.95 213.3L277.04 217.4L277.13 212.4L277.22 214.9L277.32 219.4L277.41 212.0L277.50 210.6L277.60 214.1L277.69 218.4L277.78 217.2L277.87 217.4L277.97 214.3L278.06 206.1L278.15 216.9L278.24 217.5L278.34 219.5L278.43 211.4L278.52 218.0L278.62 206.4L278.71 217.0L278.80 211.5L278.89 216.9L278.99 209.9L279.08 222.3L279.17 223.5L279.27 206.5L279.36 220.3L279.45 213.4L279.54 221.3L279.64 222.8L279.73 213.1L279.82 205.3L279.92 214.6L280.01 205.0L280.10 217.6L280.19 210.5L280.29 211.1L280.38 223.7L280.47 218.4L280.57 210.3L280.66 219.7L280.75 213.9L280.84 210.6L280.94 211.5L281.03 223.7L281.12 204.7L281.22 220.1L281.31 223.3L281.40 224.6L281.49 224.0L281.59 219.1L281.68 208.6L281.77 209.1L281.87 204.0L281.96 214.1L282.05 207.2L282.14 222.0L282.24 206.4L282.33 212.7L282.42 222.0L282.52 204.2L282.61 213.1L282.70 218.9L282.79 209.5L282.89 221.8L282.98 207.3L283.07 219.0L283.16 214.1L283.26 205.9L283.35 226.8L283.44 221.1L283.54 208.4L283.63 217.1L283.72 214.0L283.81 213.9L283.91 208.0L284.00 214.0L284.09 220.4L284.19 209.4L284.28 206.6L284.37 219.7L284.46 219.4L284.56 204.1L284.65 203.3L284.74 208.0L284.84 206.7L284.93 222.2L285.02 218.9L285.11 222.7L285.21 212.5L285.30 215.5L285.39 219.4L285.49 212.4L285.58 214.0L285.67 211.4L285.76 213.4L285.86 210.8L285.95 201.4L286.04 207.7L286.14 210.7L286.23 222.9L286.32 209.9L286.41 209.7L286.51 212.4L286.60 217.3L286.69 207.8L286.79 218.8L286.88 217.2L286.97 206.6L287.06 206.4L287.16 205.9L287.25 217.3L287.34 216.7L287.44 208.3L287.53 211.8L287.62 215.0L287.71 213.9L287.81 200.7L287.90 199.7L287.99 207.1L288.09 204.6L288.18 224.5L288.27 205.2L288.36 205.7L288.46 214.5L288.55 224.2L288.64 204.8L288.74 218.7L288.83 219.9L288.92 225.6L289.01 210.0L289.11 212.4L289.20 213.2L289.29 204.5L289.38 210.9L289.48 208.5L289.57 224.4L289.66 204.9L289.76 207.4L289.85 209.1L289.94 220.9L290.03 215.9L290.13 211.3L290.22 221.4L290.31 223.1L290.41 213.1L290.50 206.5L290.59 212.0L290.68 205.9L290.78 216.1L290.87 204.6L290.96 208.0L291.06 218.3L291.15 217.3L291.24 215.4L291.33 221.8L291.43 206.4L291.52 217.3L291.61 204.9L291.71 206.1L291.80 207.9L291.89 206.1L291.98 221.8L292.08 217.8L292.17 222.1L292.26 206.0L292.36 212.9L292.45 206.6L292.54 210.6L292.63 220.9L292.73 204.7L292.82 214.9L292.91 201.6L293.01 216.8L293.10 207.3L293.19 202.1L293.28 207.7L293.38 214.7L293.47 225.3L293.56 222.8L293.66 219.1L293.75 217.9L293.84 212.7L293.93 207.3L294.03 207.7L294.12 221.4L294.21 216.3L294.31 209.5L294.40 216.4L294.49 223.2L294.58 208.0L294.68 224.5L294.77 220.2L294.86 218.8L294.95 204.2L295.05 212.8L295.14 216.6L295.23 222.2L295.33 211.2L295.42 224.0L295.51 206.7L295.60 214.7L295.70 209.7L295.79 218.3L295.88 223.2L295.98 219.9L296.07 213.5L296.16 206.5L296.25 223.1L296.35 216.5L296.44 211.4L296.53 217.8L296.63 214.8L296.72 215.8L296.81 219.4L296.90 207.6L297.00 200.5L297.09 211.4L297.18 206.4L297.28 218.6L297.37 222.1L297.46 214.5L297.55 205.8L297.65 208.4L297.74 223.0L297.83 207.5L297.93 214.9L298.02 214.3L298.11 219.6L298.20 207.5L298.30 211.0L298.39 206.8L298.48 204.4L298.58 222.8L298.67 221.1L298.76 218.2L298.85 222.7L298.95 211.0L299.04 204.7L299.13 219.5L299.23 209.0L299.32 214.3L299.41 221.0L299.50 223.5L299.60 214.5L299.69 222.1L299.78 208.1L299.88 211.3L299.97 217.1L300.06 207.9L300.15 215.1L300.25 206.6L300.34 223.9L300.43 204.3L300.52 222.6L300.62 206.7L300.71 217.4L300.80 202.2L300.90 208.0L300.99 207.7L301.08 204.8L301.17 200.9L301.27 224.1L301.36 210.3L301.45 210.7L301.55 211.3L301.64 215.0L301.73 209.8L301.82 206.2L301.92 215.4L302.01 219.4L302.10 226.2L302.20 204.8L302.29 212.7L302.38 224.2L302.47 211.0L302.57 218.0L302.66 216.8L302.75 220.0L302.85 222.7L302.94 209.2L303.03 205.6L303.12 213.7L303.22 217.4L303.31 225.5L303.40 214.1L303.50 211.0L303.59 211.9L303.68 212.3L303.77 213.5L303.87 219.9L303.96 215.6L304.05 207.7L304.15 219.7L304.24 209.0L304.33 222.8L304.42 208.6L304.52 207.9L304.61 210.0L304.70 216.9L304.80 219.1L304.89 218.4L304.98 214.4L305.07 203.3L305.17 219.3L305.26 216.6L305.35 204.9L305.44 212.5L305.54 215.9L305.63 212.3L305.72 221.4L305.82 214.4L305.91 204.5L306.00 217.5L306.09 223.6L306.19 221.6L306.28 208.7L306.37 210.0L306.47 211.5L306.56 208.9L306.65 222.7L306.74 219.7L306.84 217.2L306.93 200.2L307.02 221.0L307.12 221.1L307.21 212.0L307.30 213.1L307.39 220.5L307.49 211.0L307.58 204.5L307.67 224.6L307.77 203.0L307.86 210.1L307.95 222.3L308.04 212.2L308.14 212.9L308.23 212.1L308.32 215.2L308.42 205.4L308.51 213.4L308.60 221.5L308.69 219.9L308.79 203.9L308.88 221.1L308.97 213.3L309.07 221.0L309.16 213.1L309.25 220.6L309.34 211.1L309.44 208.7L309.53 203.9L309.62 223.5L309.72 219.9L309.81 212.3L309.90 212.2L309.99 221.3L310.09 224.1L310.18 205.5L310.27 200.2L310.37 206.7L310.46 225.9L310.55 216.5L310.64 223.2L310.74 214.3L310.83 213.4L310.92 200.5L311.01 212.9L311.11 209.6L311.20 209.2L311.29 214.2L311.39 221.6L311.48 208.2L311.57 222.6L311.66 211.3L311.76 204.8L311.85 211.1L311.94 207.0L312.04 211.2L312.13 216.9L312.22 219.0L312.31 222.1L312.41 208.7L312.50 209.1L312.59 210.8L312.69 216.8L312.78 224.2L312.87 208.4L312.96 211.1L313.06 212.7L313.15 214.9L313.24 201.1L313.34 208.0L313.43 207.4L313.52 229.5L313.61 219.5L313.71 200.4L313.80 223.7L313.89 208.2L313.99 208.1L314.08 225.4L314.17 203.8L314.26 205.2L314.36 219.6L314.45 203.0L314.54 200.6L314.64 206.6L314.73 203.6L314.82 224.0L314.91 220.9L315.01 214.9L315.10 218.8L315.19 204.9L315.29 227.4L315.38 217.1L315.47 212.6L315.56 205.6L315.66 207.5L315.75 215.5L315.84 202.9L315.94 210.1L316.03 202.6L316.12 213.4L316.21 209.7L316.31 224.6L316.40 222.9L316.49 224.2L316.59 223.4L316.68 215.4L316.77 218.4L316.86 202.1L316.96 209.6L317.05 211.4L317.14 215.0L317.23 213.1L317.33 203.2L317.42 215.2L317.51 224.1L317.61 209.6L317.70 212.6L317.79 221.6L317.88 219.3L317.98 207.5L318.07 206.7L318.16 220.0L318.26 211.5L318.35 213.7L318.44 215.0L318.53 220.9L318.63 216.0L318.72 213.4L318.81 219.2L318.91 204.1L319.00 214.0L319.09 213.7L319.18 221.6L319.28 221.1L319.37 214.6L319.46 215.5L319.56 220.7L319.65 219.6L319.74 217.2L319.83 206.0L319.93 204.0L320.02 216.7L320.11 211.4L320.21 208.7L320.30 222.5L320.39 214.8L320.48 225.1L320.58 204.3L320.67 220.5L320.76 204.6L320.86 223.4L320.95 218.7L321.04 203.2L321.13 219.8L321.23 200.1L321.32 220.2L321.41 225.7L321.51 206.0L321.60 201.8L321.69 204.0L321.78 209.7L321.88 202.9L321.97 207.1L322.06 227.0L322.15 204.7L322.25 209.4L322.34 218.1L322.43 206.7L322.53 215.1L322.62 217.8L322.71 215.6L322.80 224.0L322.90 202.1L322.99 225.3L323.08 218.6L323.18 224.2L323.27 216.0L323.36 216.7L323.45 212.3L323.55 204.5L323.64 219.0L323.73 205.0L323.83 210.8L323.92 201.8L324.01 218.1L324.10 220.0L324.20 207.5L324.29 218.5L324.38 216.3L324.48 206.7L324.57 225.9L324.66 221.1L324.75 221.5L324.85 210.9L324.94 220.5L325.03 221.2L325.13 209.1L325.22 205.5L325.31 209.6L325.40 216.4L325.50 221.4L325.59 202.5L325.68 201.1L325.78 212.5L325.87 206.5L325.96 212.7L326.05 220.8L326.15 220.3L326.24 224.6L326.33 203.9L326.43 211.5L326.52 223.1L326.61 211.0L326.70 214.8L326.80 214.9L326.89 219.9L326.98 207.6L327.08 213.4L327.17 218.0L327.26 213.1L327.35 210.5L327.45 214.1L327.54 209.4L327.63 211.1L327.73 211.5L327.82 212.5L327.91 205.5L328.00 209.5L328.10 218.9L328.19 210.3L328.28 204.6L328.37 207.7L328.47 205.9L328.56 201.0L328.65 205.4L328.75 219.2L328.84 223.3L328.93 209.3L329.02 213.0L329.12 227.8L329.21 218.5L329.30 203.2L329.40 213.8L329.49 217.9L329.58 207.7L329.67 208.2L329.77 208.2L329.86 202.3L329.95 217.6L330.05 204.1L330.14 211.8L330.23 215.7L330.32 218.9L330.42 207.8L330.51 221.0L330.60 201.0L330.70 208.8L330.79 222.9L330.88 210.9L330.97 223.7L331.07 220.8L331.16 212.8L331.25 218.9L331.35 203.0L331.44 201.8L331.53 220.7L331.62 203.9L331.72 210.1L331.81 199.8L331.90 219.3L332.00 204.4L332.09 204.6L332.18 207.0L332.27 218.2L332.37 209.6L332.46 225.2L332.55 212.6L332.65 216.1L332.74 203.8L332.83 210.4L332.92 200.7L333.02 214.8L333.11 204.0L333.20 217.7L333.29 221.7L333.39 213.1L333.48 203.1L333.57 214.7L333.67 207.4L333.76 211.1L333.85 213.1L333.94 216.6L334.04 207.3L334.13 224.1L334.22 225.0L334.32 223.9L334.41 205.6L334.50 222.4L334.59 210.8L334.69 205.2L334.78 217.5L334.87 226.1L334.97 213.1L335.06 216.1L335.15 215.1L335.24 213.8L335.34 200.3L335.43 223.4L335.52 206.9L335.62 212.0L335.71 212.0L335.80 212.2L335.89 205.6L335.99 219.3L336.08 206.0L336.17 216.2L336.27 213.8L336.36 222.5L336.45 210.2L336.54 207.3L336.64 225.1L336.73 214.0L336.82 213.0L336.92 214.9L337.01 206.7L337.10 222.7L337.19 216.8L337.29 205.6L337.38 203.7L337.47 209.8L337.57 211.3L337.66 211.1L337.75 210.2L337.84 212.9L337.94 216.5L338.03 223.1L338.12 216.6L338.22 208.7L338.31 211.3L338.40 206.2L338.49 212.1L338.59 221.4L338.68 217.9L338.77 202.1L338.87 212.2L338.96 208.4L339.05 215.1L339.14 214.3L339.24 210.0L339.33 213.9L339.42 221.0L339.51 208.8L339.61 203.3L339.70 216.0L339.79 222.3L339.89 217.5L339.98 212.0L340.07 208.6L340.16 200.8L340.26 217.2L340.35 213.4L340.44 205.8L340.54 217.1L340.63 209.9L340.72 217.4L340.81 223.7L340.91 209.4L341.00 208.5L341.09 212.6L341.19 221.1L341.28 213.5L341.37 204.9L341.46 209.3L341.56 216.0L341.65 203.8L341.74 205.6L341.84 211.6L341.93 212.8L342.02 211.9L342.11 204.2L342.21 206.7L342.30 208.5L342.39 207.8L342.49 217.1L342.58 209.4L342.67 217.6L342.76 222.0L342.86 211.9L342.95 210.1L343.04 217.1L343.14 209.2L343.23 201.0L343.32 201.0L343.41 217.9L343.51 223.1L343.60 221.9L343.69 213.4L343.79 213.8L343.88 210.4L343.97 212.0L344.06 208.9L344.16 221.6L344.25 225.7L344.34 218.6L344.44 203.8L344.53 212.0L344.62 202.1L344.71 209.3L344.81 217.2L344.90 203.3L344.99 216.1L345.08 204.5L345.18 222.5L345.27 213.5L345.36 215.4L345.46 206.6L345.55 223.5L345.64 210.7L345.73 223.9L345.83 211.0L345.92 216.9L346.01 212.1L346.11 223.1L346.20 212.2L346.29 209.4L346.38 203.2L346.48 222.7L346.57 213.5L346.66 218.9L346.76 213.7L346.85 209.6L346.94 220.2L347.03 213.0L347.13 207.5L347.22 224.9L347.31 215.6L347.41 207.5L347.50 223.0L347.59 217.2L347.68 217.1L347.78 205.4L347.87 210.9L347.96 210.0L348.06 203.1L348.15 204.4L348.24 220.4L348.33 214.3L348.43 213.9L348.52 215.4L348.61 208.6L348.71 218.0L348.80 216.0L348.89 218.5L348.98 202.8L349.08 219.5L349.17 222.2L349.26 207.9L349.36 210.9L349.45 214.4L349.54 224.4L349.63 222.1L349.73 205.0L349.82 215.9L349.91 220.3L350.00 215.3L350.10 218.5L350.19 206.6L350.28 214.0L350.38 224.2L350.47 226.1L350.56 217.8L350.65 206.0L350.75 208.2L350.84 202.8L350.93 220.6L351.03 204.7L351.12 214.4L351.21 212.1L351.30 206.9L351.40 216.1L351.49 204.7L351.58 220.2L351.68 215.2L351.77 223.4L351.86 215.4L351.95 217.2L352.05 208.1L352.14 218.5L352.23 207.2L352.33 215.7L352.42 205.9L352.51 217.5L352.60 214.7L352.70 216.7L352.79 223.3L352.88 209.5L352.98 221.1L353.07 219.6L353.16 213.2L353.25 214.8L353.35 203.5L353.44 204.8L353.53 209.5L353.63 213.8L353.72 213.7L353.81 207.8L353.90 205.9L354.00 209.5L354.09 209.0L354.18 203.5L354.28 219.8L354.37 208.9L354.46 212.4L354.55 215.7L354.65 210.1L354.74 222.6L354.83 207.1L354.93 205.8L355.02 206.4L355.11 203.0L355.20 219.8L355.30 223.8L355.39 220.3L355.48 226.8L355.57 211.4L355.67 209.1L355.76 224.6L355.85 204.3L355.95 204.9L356.04 203.9L356.13 220.7L356.22 214.9L356.32 222.0L356.41 218.7L356.50 214.4L356.60 222.1L356.69 212.2L356.78 213.7L356.87 205.6L356.97 213.5L357.06 211.6L357.15 214.0L357.25 206.6L357.34 201.0L357.43 207.4L357.52 212.1L357.62 213.9L357.71 204.7L357.80 211.2L357.90 218.9L357.99 213.3L358.08 212.4L358.17 207.7L358.27 221.0L358.36 223.7L358.45 214.8L358.55 215.8L358.64 203.1L358.73 221.7L358.82 220.8L358.92 211.2L359.01 221.5L359.10 210.7L359.20 225.1L359.29 208.8L359.38 216.5L359.47 214.2L359.57 216.0L359.66 207.8L359.75 211.7L359.85 217.4L359.94 219.0L360.03 199.2L360.12 206.5L360.22 212.0L360.31 223.1L360.40 208.4L360.50 209.6L360.59 212.5L360.68 213.9L360.77 225.2L360.87 221.5L360.96 214.2L361.05 205.7L361.14 218.8L361.24 209.6L361.33 217.1L361.42 203.1L361.52 203.1L361.61 212.3L361.70 203.7L361.79 204.9L361.89 226.2L361.98 204.4L362.07 210.6L362.17 213.4L362.26 214.9L362.35 222.8L362.44 215.9L362.54 221.9L362.63 217.0L362.72 217.1L362.82 220.0L362.91 201.4L363.00 201.6L363.09 224.4L363.19 202.0L363.28 213.9L363.37 224.7L363.47 206.1L363.56 221.7L363.65 225.4L363.74 219.6L363.84 204.3L363.93 203.1L364.02 215.2L364.12 216.6L364.21 221.4L364.30 211.5L364.39 216.9L364.49 211.4L364.58 216.3L364.67 202.6L364.77 209.2L364.86 207.8L364.95 210.8L365.04 214.2L365.14 207.8L365.23 210.7L365.32 204.5L365.42 213.1L365.51 213.7L365.60 215.7L365.69 206.9L365.79 221.3L365.88 217.9L365.97 217.1L366.07 211.6L366.16 210.4L366.25 216.5L366.34 224.1L366.44 214.1L366.53 219.9L366.62 208.7L366.71 221.2L366.81 213.2L366.90 220.9L366.99 215.2L367.09 202.3L367.18 215.2L367.27 209.8L367.36 214.0L367.46 206.7L367.55 206.7L367.64 224.8L367.74 218.1L367.83 221.8L367.92 207.0L368.01 212.9L368.11 222.6L368.20 221.1L368.29 219.8L368.39 207.1L368.48 205.4L368.57 221.2L368.66 213.8L368.76 205.5L368.85 211.2L368.94 216.2L369.04 208.7L369.13 199.9L369.22 207.3L369.31 209.0L369.41 221.5L369.50 206.2L369.59 207.9L369.69 222.3L369.78 216.1L369.87 206.6L369.96 212.7L370.06 213.4L370.15 222.9L370.24 208.9L370.34 206.0L370.43 222.1L370.52 211.2L370.61 224.2L370.71 210.6L370.80 212.0L370.89 222.0L370.99 210.1L371.08 220.5L371.17 209.1L371.26 219.0L371.36 220.9L371.45 222.5L371.54 222.4L371.64 210.9L371.73 220.1L371.82 205.1L371.91 210.9L372.01 210.3L372.10 219.7L372.19 213.1L372.29 209.7L372.38 207.1L372.47 221.7L372.56 209.9L372.66 206.3L372.75 223.6L372.84 205.2L372.93 205.2L373.03 203.3L373.12 221.8L373.21 217.1L373.31 212.2L373.40 222.3L373.49 209.7L373.58 214.6L373.68 214.8L373.77 209.7L373.86 221.6L373.96 208.3L374.05 204.2L374.14 214.4L374.23 239.5L374.33 210.9L374.42 196.0L374.51 210.6L374.61 208.9L374.70 207.9L374.79 209.4L374.88 217.9L374.98 212.6L375.07 209.5L375.16 222.1L375.26 214.5L375.35 212.5L375.44 208.4L375.53 213.4L375.63 211.7L375.72 209.5L375.81 200.5L375.91 223.5L376.00 213.2L376.09 221.4L376.18 210.1L376.28 220.8L376.37 205.4L376.46 220.2L376.56 204.1L376.65 224.5L376.74 213.6L376.83 207.0L376.93 221.7L377.02 201.3L377.11 223.1L377.21 222.4L377.30 210.5L377.39 216.7L377.48 203.9L377.58 216.7L377.67 217.1L377.76 207.8L377.86 216.7L377.95 206.5L378.04 218.5L378.13 199.3L378.23 209.0L378.32 206.1L378.41 225.1L378.50 210.4L378.60 219.4L378.69 220.8L378.78 206.1L378.88 224.5L378.97 223.6L379.06 200.4L379.15 223.5L379.25 226.6L379.34 205.2L379.43 205.2L379.53 213.0L379.62 211.2L379.71 219.8L379.80 213.2L379.90 206.6L379.99 209.2L380.08 207.9L380.18 222.5L380.27 228.7L380.36 218.1L380.45 218.8L380.55 216.4L380.64 217.4L380.73 198.4L380.83 201.8L380.92 218.2L381.01 216.0L381.10 207.2L381.20 218.7L381.29 213.8L381.38 220.4L381.48 200.8L381.57 221.0L381.66 208.1L381.75 221.4L381.85 208.5L381.94 217.0L382.03 211.5L382.13 221.0L382.22 202.5L382.31 220.3L382.40 221.3L382.50 205.9L382.59 203.0L382.68 220.5L382.78 205.6L382.87 216.3L382.96 215.7L383.05 205.6L383.15 204.5L383.24 206.6L383.33 200.0L383.43 218.4L383.52 209.6L383.61 216.8L383.70 209.9L383.80 217.2L383.89 208.3L383.98 218.6L384.07 219.4L384.17 222.1L384.26 201.5L384.35 206.4L384.45 212.1L384.54 218.1L384.63 207.2L384.72 219.5L384.82 214.6L384.91 221.2L385.00 217.1L385.10 212.6L385.19 220.7L385.28 221.3L385.37 215.7L385.47 221.4L385.56 207.2L385.65 224.2L385.75 212.3L385.84 211.7L385.93 224.5L386.02 218.5L386.12 213.1L386.21 221.8L386.30 222.9L386.40 207.7L386.49 220.8L386.58 212.6L386.67 206.7L386.77 219.0L386.86 218.7L386.95 207.2L387.05 213.3L387.14 220.2L387.23 215.9L387.32 211.3L387.42 221.8L387.51 218.2L387.60 206.0L387.70 206.3L387.79 205.2L387.88 222.5L387.97 206.0L388.07 206.9L388.16 206.5L388.25 211.1L388.35 207.3L388.44 209.9L388.53 217.9L388.62 216.4L388.72 203.8L388.81 216.9L388.90 208.6L389.00 211.5L389.09 211.3L389.18 249.0L389.27 208.0L389.37 205.8L389.46 198.6L389.55 210.3L389.64 221.6L389.74 223.9L389.83 217.7L389.92 203.5L390.02 224.5L390.11 205.8L390.20 205.4L390.29 214.0L390.39 203.5L390.48 215.9L390.57 203.9L390.67 208.1L390.76 217.1L390.85 224.6L390.94 213.1L391.04 212.4L391.13 218.3L391.22 222.5L391.32 217.8L391.41 219.8L391.50 224.0L391.59 218.6L391.69 222.2L391.78 212.3L391.87 205.3L391.97 216.5L392.06 209.2L392.15 203.2L392.24 208.3L392.34 223.0L392.43 220.8L392.52 220.9L392.62 203.5L392.71 216.6L392.80 212.5L392.89 224.2L392.99 213.8L393.08 202.3L393.17 210.0L393.27 210.6L393.36 211.7L393.45 200.0L393.54 211.0L393.64 206.4L393.73 222.3L393.82 220.7L393.92 214.5L394.01 205.4L394.10 213.1L394.19 217.1L394.29 224.3L394.38 216.3L394.47 214.4L394.56 220.8L394.66 219.1L394.75 214.1L394.84 207.6L394.94 211.6L395.03 210.8L395.12 222.6L395.21 211.7L395.31 223.7L395.40 209.7L395.49 206.0L395.59 215.2L395.68 211.7L395.77 222.2L395.86 214.7L395.96 212.6L396.05 201.5L396.14 207.0L396.24 202.1L396.33 211.9L396.42 216.5L396.51 216.1L396.61 208.8L396.70 213.8L396.79 207.0L396.89 211.9L396.98 218.2L397.07 222.8L397.16 211.4L397.26 206.8L397.35 213.5L397.44 215.2L397.54 217.0L397.63 220.0L397.72 222.2L397.81 199.8L397.91 219.5L398.00 206.5L398.09 204.0L398.19 219.2L398.28 202.6L398.37 203.1L398.46 209.9L398.56 215.7L398.65 208.0L398.74 204.3L398.84 215.9L398.93 219.1L399.02 212.1L399.11 203.0L399.21 205.2L399.30 208.8L399.39 206.1L399.49 218.8L399.58 219.0L399.67 216.3L399.76 207.5L399.86 215.2L399.95 217.4L400.04 220.5L400.13 204.4L400.23 212.6L400.32 219.7L400.41 209.4L400.51 223.2L400.60 208.3L400.69 220.3L400.78 212.2L400.88 215.9L400.97 218.8L401.06 203.2L401.16 213.0L401.25 217.0L401.34 222.0L401.43 230.5L401.53 217.0L401.62 211.1L401.71 210.1L401.81 206.5L401.90 210.2L401.99 208.9L402.08 211.2L402.18 223.9L402.27 205.8L402.36 219.4L402.46 203.2L402.55 209.4L402.64 207.5L402.73 207.6L402.83 211.3L402.92 212.0L403.01 217.4L403.11 201.3L403.20 219.9L403.29 207.2L403.38 223.8L403.48 209.7L403.57 211.5L403.66 207.9L403.76 204.6L403.85 225.1L403.94 199.1L404.03 205.8L404.13 206.1L404.22 205.0L404.31 202.4L404.41 203.5L404.50 221.4L404.59 205.8L404.68 205.4L404.78 207.8L404.87 207.9L404.96 203.7L405.06 220.6L405.15 222.9L405.24 221.7L405.33 210.1L405.43 214.5L405.52 213.1L405.61 209.7L405.70 202.1L405.80 221.6L405.89 209.8L405.98 201.0L406.08 222.1L406.17 209.4L406.26 214.9L406.35 212.6L406.45 221.7L406.54 216.5L406.63 225.4L406.73 208.3L406.82 205.0L406.91 221.4L407.00 215.3L407.10 224.7L407.19 207.8L407.28 221.2L407.38 213.0L407.47 212.5L407.56 208.0L407.65 209.9L407.75 215.4L407.84 217.4L407.93 210.8L408.03 208.2L408.12 205.0L408.21 212.1L408.30 205.9L408.40 225.1L408.49 203.5L408.58 211.5L408.68 218.1L408.77 207.4L408.86 206.1L408.95 212.9L409.05 207.0L409.14 203.5L409.23 223.9L409.33 214.5L409.42 208.3L409.51 208.0L409.60 218.8L409.70 221.7L409.79 216.4L409.88 213.6L409.98 205.0L410.07 218.5L410.16 212.9L410.25 203.4L410.35 225.5L410.44 215.0L410.53 203.2L410.63 214.5L410.72 209.4L410.81 210.4L410.90 219.9L411.00 214.3L411.09 215.6L411.18 202.3L411.27 207.7L411.37 201.2L411.46 225.0L411.55 219.3L411.65 208.2L411.74 222.8L411.83 217.8L411.92 221.6L412.02 211.6L412.11 216.7L412.20 213.2L412.30 219.0L412.39 225.9L412.48 201.0L412.57 214.9L412.67 204.9L412.76 207.7L412.85 217.4L412.95 214.5L413.04 216.6L413.13 212.5L413.22 221.8L413.32 209.3L413.41 209.2L413.50 218.2L413.60 206.0L413.69 210.9L413.78 218.3L413.87 205.7L413.97 219.1L414.06 212.3L414.15 210.0L414.25 218.2L414.34 214.8L414.43 224.8L414.52 221.7L414.62 223.2L414.71 210.1L414.80 209.8L414.90 223.8L414.99 212.6L415.08 213.1L415.17 206.1L415.27 210.1L415.36 229.4L415.45 211.8L415.55 215.6L415.64 205.5L415.73 207.6L415.82 213.9L415.92 216.9L416.01 203.4L416.10 219.6L416.20 216.7L416.29 207.4L416.38 221.0L416.47 203.0L416.57 210.6L416.66 221.1L416.75 208.3L416.85 206.6L416.94 220.6L417.03 210.0L417.12 211.6L417.22 203.2L417.31 214.7L417.40 221.5L417.49 218.7L417.59 206.2L417.68 206.1L417.77 217.2L417.87 254.0L417.96 216.9L418.05 222.8L418.14 223.0L418.24 209.9L418.33 207.4L418.42 221.5L418.52 225.6L418.61 203.5L418.70 220.6L418.79 217.8L418.89 216.5L418.98 214.4L419.07 222.3L419.17 206.8L419.26 219.3L419.35 216.2L419.44 204.5L419.54 206.7L419.63 219.3L419.72 210.6L419.82 223.1L419.91 210.3L420.00 209.4L420.09 209.9L420.19 213.7L420.28 217.5L420.37 205.8L420.47 208.5L420.56 220.9L420.65 213.3L420.74 225.9L420.84 212.9L420.93 203.2L421.02 205.7L421.12 200.3L421.21 203.2L421.30 218.5L421.39 204.1L421.49 214.3L421.58 206.1L421.67 215.1L421.77 217.8L421.86 204.4L421.95 224.5L422.04 208.3L422.14 219.3L422.23 215.7L422.32 213.5L422.42 222.0L422.51 219.3L422.60 206.9L422.69 206.7L422.79 216.3L422.88 220.6L422.97 205.8L423.06 211.4L423.16 220.4L423.25 207.4L423.34 216.5L423.44 215.9L423.53 206.2L423.62 204.0L423.71 220.2L423.81 209.8L423.90 215.9L423.99 218.4L424.09 216.8L424.18 222.7L424.27 218.3L424.36 212.9L424.46 203.3L424.55 201.2L424.64 214.3L424.74 211.6L424.83 206.9L424.92 205.1L425.01 224.2L425.11 214.6L425.20 219.6L425.29 210.8L425.39 205.8L425.48 225.1L425.57 220.0L425.66 207.1L425.76 214.1L425.85 223.3L425.94 212.9L426.04 203.9L426.13 225.2L426.22 206.6L426.31 217.7L426.41 206.8L426.50 218.2L426.59 227.2L426.69 216.3L426.78 214.0L426.87 217.2L426.96 219.1L427.06 215.6L427.15 220.4L427.24 214.0L427.34 217.5L427.43 213.1L427.52 200.9L427.61 221.9L427.71 212.6L427.80 211.9L427.89 211.2L427.99 207.6L428.08 218.2L428.17 210.1L428.26 217.0L428.36 209.4L428.45 223.8L428.54 210.7L428.63 211.9L428.73 205.9L428.82 219.9L428.91 217.0L429.01 219.7L429.10 222.3L429.19 217.4L429.28 201.9L429.38 225.6L429.47 203.5L429.56 212.7L429.66 215.8L429.75 208.1L429.84 204.3L429.93 205.5L430.03 218.1L430.12 199.8L430.21 202.2L430.31 223.5L430.40 224.4L430.49 203.4L430.58 222.6L430.68 219.7L430.77 222.8L430.86 222.3L430.96 200.7L431.05 215.3L431.14 211.3L431.23 205.9L431.33 203.7L431.42 200.8L431.51 215.6L431.61 209.8L431.70 224.8L431.79 218.3L431.88 205.0L431.98 205.8L432.07 218.6L432.16 210.4L432.26 218.9L432.35 212.5L432.44 217.1L432.53 222.8L432.63 218.3L432.72 218.4L432.81 203.3L432.91 205.5L433.00 217.1L433.09 208.2L433.18 215.8L433.28 218.3L433.37 214.4L433.46 220.9L433.56 213.4L433.65 204.6L433.74 212.0L433.83 217.0L433.93 224.9L434.02 206.5L434.11 218.7L434.20 215.8L434.30 207.3L434.39 221.8L434.48 208.0L434.58 222.5L434.67 212.9L434.76 219.9L434.85 202.6L434.95 218.6L435.04 218.2L435.13 201.6L435.23 225.9L435.32 209.2L435.41 217.6L435.50 223.3L435.60 203.5L435.69 201.0L435.78 220.8L435.88 220.3L435.97 202.7L436.06 201.0L436.15 211.5L436.25 211.6L436.34 214.6L436.43 211.7L436.53 207.1L436.62 204.2L436.71 206.9L436.80 222.1L436.90 203.9L436.99 212.4L437.08 220.9L437.18 206.7L437.27 204.0L437.36 215.2L437.45 217.3L437.55 202.1L437.64 205.1L437.73 217.8L437.83 216.3L437.92 228.8L438.01 208.0L438.10 224.3L438.20 216.9L438.29 222.2L438.38 213.2L438.48 219.8L438.57 218.3L438.66 215.9L438.75 220.7L438.85 221.3L438.94 215.0L439.03 221.1L439.12 212.3L439.22 200.7L439.31 207.8L439.40 220.3L439.50 202.0L439.59 205.8L439.68 207.9L439.77 215.9L439.87 213.1L439.96 214.6L440.05 207.1L440.15 216.2L440.24 219.0L440.33 216.0L440.42 215.8L440.52 210.2L440.61 222.0L440.70 221.4L440.80 198.4L440.89 207.8L440.98 206.0L441.07 216.1L441.17 213.0L441.26 210.5L441.35 202.7L441.45 211.8L441.54 221.2L441.63 205.9L441.72 209.0L441.82 203.6L441.91 212.4L442.00 213.9L442.10 221.2L442.19 221.5L442.28 212.9L442.37 212.9L442.47 205.6L442.56 207.2L442.65 203.6L442.75 206.9L442.84 208.1L442.93 213.0L443.02 216.9L443.12 220.8L443.21 212.2L443.30 209.4L443.40 218.8L443.49 210.8L443.58 202.7L443.67 221.7L443.77 203.9L443.86 215.2L443.95 210.9L444.05 214.1L444.14 218.9L444.23 212.9L444.32 220.3L444.42 225.5L444.51 211.9L444.60 217.5L444.69 206.3L444.79 211.0L444.88 219.8L444.97 210.0L445.07 217.8L445.16 220.3L445.25 211.8L445.34 223.6L445.44 212.7L445.53 207.9L445.62 203.4L445.72 206.3L445.81 213.4L445.90 217.6L445.99 216.7L446.09 219.0L446.18 224.3L446.27 207.4L446.37 204.6L446.46 224.1L446.55 209.2L446.64 221.9L446.74 222.1L446.83 200.8L446.92 220.5L447.02 205.3L447.11 219.1L447.20 216.1L447.29 209.8L447.39 215.5L447.48 208.1L447.57 221.1L447.67 223.7L447.76 202.2L447.85 213.1L447.94 209.0L448.04 205.8L448.13 212.4L448.22 218.4L448.32 215.7L448.41 205.8L448.50 220.9L448.59 216.4L448.69 213.8L448.78 204.5L448.87 209.6L448.97 204.9L449.06 209.9L449.15 225.1L449.24 210.6L449.34 206.7L449.43 217.6L449.52 219.7L449.62 214.9L449.71 212.6L449.80 222.8L449.89 203.0L449.99 214.4L450.08 220.0L450.17 209.2L450.26 206.6L450.36 213.7L450.45 218.3L450.54 220.3L450.64 213.7L450.73 224.5L450.82 218.8L450.91 209.1L451.01 221.7L451.10 219.8L451.19 207.0L451.29 220.1L451.38 205.9L451.47 212.0L451.56 206.5L451.66 212.1L451.75 212.2L451.84 213.6L451.94 210.9L452.03 220.1L452.12 211.0L452.21 221.8L452.31 213.8L452.40 216.1L452.49 217.7L452.59 213.5L452.68 221.9L452.77 206.1L452.86 218.2L452.96 210.0L453.05 224.2L453.14 220.6L453.24 210.3L453.33 205.0L453.42 203.8L453.51 221.2L453.61 225.8L453.70 207.7L453.79 222.2L453.89 217.9L453.98 208.8L454.07 208.5L454.16 211.1L454.26 225.1L454.35 222.0L454.44 219.0L454.54 231.1L454.63 213.2L454.72 221.7L454.81 222.2L454.91 222.7L455.00 209.4L455.09 217.8L455.19 206.2L455.28 211.3L455.37 222.1L455.46 215.6L455.56 215.5L455.65 221.5L455.74 216.4L455.83 204.9L455.93 215.2L456.02 206.9L456.11 219.8L456.21 216.4L456.30 204.7L456.39 205.3L456.48 218.3L456.58 201.7L456.67 215.9L456.76 210.5L456.86 208.8L456.95 208.8L457.04 221.4L457.13 213.8L457.23 202.5L457.32 224.0L457.41 209.7L457.51 222.2L457.60 215.6L457.69 217.8L457.78 211.6L457.88 222.9L457.97 209.2L458.06 224.0L458.16 207.2L458.25 203.7L458.34 216.5L458.43 206.2L458.53 213.1L458.62 222.6L458.71 221.1L458.81 212.5L458.90 212.3L458.99 221.2L459.08 209.3L459.18 209.5L459.27 207.7L459.36 216.6L459.46 207.9L459.55 209.9L459.64 221.7L459.73 218.4L459.83 203.7L459.92 210.4L460.01 212.4L460.11 214.3L460.20 204.9L460.29 212.0L460.38 220.1L460.48 222.6L460.57 221.5L460.66 214.4L460.76 216.3L460.85 221.2L460.94 210.8L461.03 220.8L461.13 220.7L461.22 222.0L461.31 206.0L461.40 208.7L461.50 206.5L461.59 210.4L461.68 220.8L461.78 209.2L461.87 226.2L461.96 212.7L462.05 207.5L462.15 220.3L462.24 222.0L462.33 203.4L462.43 201.0L462.52 209.5L462.61 215.1L462.70 220.7L462.80 209.9L462.89 213.8L462.98 220.5L463.08 210.5L463.17 202.9L463.26 217.4L463.35 217.4L463.45 221.2L463.54 214.3L463.63 207.6L463.73 211.1L463.82 207.2L463.91 219.2L464.00 219.4L464.10 218.6L464.19 217.8L464.28 209.5L464.38 215.1L464.47 200.8L464.56 218.2L464.65 221.2L464.75 204.3L464.84 221.9L464.93 214.7L465.03 209.4L465.12 211.3L465.21 209.2L465.30 216.5L465.40 213.3L465.49 214.5L465.58 221.3L465.68 205.8L465.77 221.6L465.86 219.3L465.95 205.9L466.05 217.8L466.14 208.1L466.23 220.0L466.33 204.1L466.42 217.7L466.51 218.6L466.60 206.6L466.70 205.5L466.79 209.4L466.88 218.8L466.98 221.4L467.07 204.7L467.16 221.5L467.25 216.3L467.35 212.3L467.44 216.6L467.53 205.0L467.62 205.5L467.72 203.6L467.81 202.8L467.90 218.4L468.00 207.6L468.09 212.5L468.18 217.6L468.27 226.2L468.37 219.8L468.46 206.3L468.55 218.5L468.65 209.4L468.74 203.9L468.83 216.4L468.92 212.9L469.02 208.9L469.11 207.5L469.20 204.7L469.30 213.1L469.39 220.7L469.48 218.4L469.57 223.0L469.67 216.9L469.76 220.6L469.85 218.9L469.95 213.6L470.04 206.7L470.13 207.7L470.22 222.4L470.32 202.6L470.41 210.9L470.50 212.0L470.60 213.6L470.69 206.5L470.78 212.7L470.87 216.9L470.97 204.3L471.06 219.6L471.15 206.7L471.25 222.9L471.34 202.4L471.43 225.2L471.52 214.0L471.62 205.0L471.71 219.1L471.80 220.5L471.90 203.8L471.99 205.2L472.08 211.4L472.17 204.8L472.27 220.8L472.36 213.9L472.45 206.9L472.55 219.1L472.64 206.4L472.73 212.9L472.82 206.3L472.92 217.2L473.01 210.2L473.10 212.8L473.19 205.2L473.29 207.1L473.38 211.8L473.47 220.0L473.57 216.3L473.66 205.6L473.75 214.7L473.84 221.8L473.94 220.3L474.03 211.6L474.12 213.8L474.22 220.7L474.31 223.2L474.40 228.7L474.49 225.1L474.59 209.1L474.68 226.3L474.77 211.2L474.87 201.3L474.96 211.6L475.05 223.6L475.14 204.2L475.24 223.1L475.33 221.7L475.42 214.0L475.52 208.7L475.61 211.3L475.70 205.5L475.79 210.0L475.89 209.7L475.98 219.4L476.07 214.9L476.17 220.6L476.26 213.5L476.35 204.3L476.44 205.8L476.54 206.4L476.63 218.6L476.72 208.0L476.82 212.2L476.91 218.8L477.00 219.8L477.09 222.3L477.19 212.9L477.28 205.7L477.37 204.5L477.47 222.7L477.56 214.6L477.65 216.7L477.74 219.1L477.84 207.2L477.93 215.4L478.02 209.0L478.12 216.4L478.21 203.4L478.30 219.2L478.39 226.0L478.49 210.2L478.58 217.4L478.67 226.1L478.76 211.0L478.86 204.7L478.95 205.3L479.04 206.4L479.14 220.0L479.23 205.2L479.32 218.1L479.41 206.8L479.51 206.3L479.60 216.2L479.69 218.1L479.79 207.9L479.88 224.9L479.97 212.5L480.06 203.1L480.16 214.0L480.25 217.0L480.34 215.5L480.44 220.6L480.53 222.0L480.62 217.5L480.71 211.7L480.81 204.7L480.90 203.1L480.99 217.7L481.09 221.7L481.18 218.6L481.27 208.6L481.36 227.5L481.46 204.9L481.55 206.9L481.64 216.6L481.74 209.1L481.83 221.7L481.92 217.0L482.01 212.0L482.11 222.1L482.20 220.5L482.29 227.0L482.39 202.9L482.48 204.2L482.57 204.1L482.66 202.1L482.76 199.3L482.85 205.8L482.94 216.7L483.04 210.1L483.13 209.6L483.22 206.9L483.31 203.5L483.41 218.0L483.50 212.0L483.59 205.2L483.69 205.2L483.78 222.0L483.87 211.1L483.96 210.7L484.06 208.4L484.15 208.2L484.24 221.5L484.33 222.0L484.43 217.6L484.52 218.5L484.61 223.7L484.71 210.7L484.80 206.7L484.89 204.9L484.98 206.1L485.08 205.6L485.17 220.1L485.26 223.5L485.36 219.6L485.45 226.8L485.54 209.0L485.63 206.2L485.73 204.7L485.82 204.0L485.91 215.7L486.01 219.5L486.10 207.0L486.19 219.7L486.28 209.4L486.38 222.5L486.47 204.2L486.56 220.8L486.66 209.7L486.75 223.6L486.84 220.2L486.93 219.3L487.03 224.9L487.12 224.1L487.21 224.3L487.31 218.5L487.40 207.4L487.49 213.1L487.58 217.5L487.68 214.9L487.77 204.9L487.86 214.2L487.96 201.7L488.05 224.5L488.14 204.3L488.23 214.5L488.33 210.1L488.42 201.2L488.51 207.7L488.61 224.5L488.70 209.7L488.79 201.1L488.88 214.4L488.98 212.4L489.07 209.3L489.16 220.6L489.25 209.3L489.35 204.4L489.44 222.4L489.53 220.0L489.63 206.8L489.72 216.7L489.81 208.1L489.90 207.9L490.00 203.9L490.09 215.6L490.18 224.7L490.28 212.3L490.37 205.4L490.46 226.9L490.55 216.5L490.65 203.3L490.74 223.4L490.83 225.3L490.93 215.7L491.02 207.8L491.11 213.4L491.20 217.2L491.30 219.7L491.39 211.9L491.48 209.2L491.58 208.6L491.67 209.0L491.76 218.8L491.85 210.5L491.95 214.1L492.04 221.9L492.13 202.2L492.23 207.1L492.32 205.4L492.41 225.5L492.50 222.1L492.60 225.0L492.69 208.2L492.78 221.4L492.88 221.1L492.97 212.6L493.06 214.3L493.15 215.9L493.25 216.1L493.34 208.9L493.43 215.0L493.53 223.9L493.62 225.8L493.71 217.0L493.80 225.1L493.90 216.9L493.99 202.5L494.08 225.0L494.18 216.6L494.27 221.3L494.36 209.3L494.45 217.1L494.55 221.0L494.64 221.0L494.73 209.0L494.82 214.3L494.92 214.1L495.01 220.7L495.10 215.4L495.20 223.7L495.29 202.8L495.38 223.5L495.47 219.5L495.57 210.9L495.66 210.1L495.75 209.1L495.85 214.8L495.94 208.1L496.03 209.6L496.12 206.9L496.22 212.6L496.31 215.8L496.40 219.3L496.50 207.0L496.59 220.9L496.68 212.1L496.77 215.9L496.87 216.1L496.96 224.1L497.05 211.4L497.15 205.8L497.24 227.0L497.33 219.5L497.42 211.5L497.52 207.1L497.61 220.4L497.70 213.4L497.80 204.5L497.89 223.5L497.98 213.7L498.07 215.1L498.17 219.5L498.26 224.7L498.35 222.5L498.45 206.1L498.54 222.5L498.63 227.7L498.72 213.2L498.82 217.0L498.91 208.0L499.00 214.5L499.10 218.7L499.19 221.6L499.28 219.1L499.37 214.6L499.47 223.4L499.56 218.6L499.65 220.1L499.75 203.0L499.84 204.1L499.93 217.6L500.02 223.0L500.12 222.7L500.21 212.4L500.30 204.4L500.39 210.0L500.49 220.9L500.58 216.3L500.67 211.5L500.77 210.4L500.86 207.6L500.95 208.4L501.04 212.3L501.14 213.9L501.23 214.8L501.32 208.5L501.42 221.0L501.51 205.4L501.60 221.0L501.69 216.3L501.79 215.6L501.88 217.2L501.97 203.1L502.07 203.7L502.16 208.1L502.25 219.8L502.34 226.4L502.44 215.9L502.53 208.5L502.62 204.5L502.72 217.2L502.81 203.7L502.90 222.7L502.99 215.5L503.09 201.9L503.18 206.9L503.27 213.3L503.37 215.5L503.46 215.3L503.55 223.7L503.64 205.4L503.74 219.9L503.83 209.3L503.92 214.8L504.02 223.5L504.11 218.0L504.20 216.4L504.29 213.0L504.39 221.1L504.48 205.9L504.57 206.3L504.67 211.0L504.76 224.6L504.85 216.4L504.94 211.3L505.04 219.7L505.13 209.1L505.22 224.0L505.32 219.0L505.41 219.5L505.50 212.7L505.59 215.7L505.69 205.7L505.78 223.1L505.87 219.3L505.96 225.7L506.06 210.9L506.15 220.6L506.24 201.4L506.34 210.5L506.43 207.4L506.52 217.1L506.61 210.4L506.71 212.4L506.80 218.4L506.89 220.5L506.99 221.6L507.08 221.7L507.17 224.8L507.26 215.8L507.36 211.8L507.45 223.8L507.54 222.7L507.64 201.4L507.73 211.0L507.82 213.4L507.91 217.6L508.01 209.4L508.10 215.6L508.19 221.1L508.29 216.1L508.38 217.4L508.47 220.3L508.56 208.8L508.66 217.8L508.75 204.1L508.84 217.2L508.94 209.6L509.03 206.8L509.12 211.5L509.21 219.3L509.31 216.6L509.40 218.8L509.49 219.6L509.59 222.8L509.68 215.1L509.77 201.7L509.86 213.6L509.96 206.6L510.05 213.4L510.14 215.9L510.24 219.0L510.33 219.1L510.42 211.1L510.51 224.3L510.61 219.0L510.70 226.2L510.79 220.1L510.89 219.2L510.98 216.3L511.07 209.1L511.16 220.1L511.26 208.1L511.35 199.2L511.44 203.5L511.54 218.0L511.63 220.6L511.72 224.2L511.81 221.9L511.91 223.0L512.00 221.0L512.09 206.7L512.18 204.9L512.28 220.7L512.37 205.4L512.46 216.7L512.56 206.8L512.65 203.8L512.74 211.4L512.83 218.3L512.93 225.9L513.02 215.8L513.11 222.5L513.21 205.0L513.30 215.5L513.39 220.9L513.48 209.7L513.58 209.9L513.67 205.4L513.76 203.8L513.86 208.0L513.95 219.8L514.04 214.8L514.13 220.1L514.23 224.9L514.32 210.7L514.41 216.3L514.51 204.4L514.60 216.0L514.69 221.2L514.78 212.3L514.88 208.3L514.97 200.2L515.06 216.5L515.16 216.6L515.25 217.4L515.34 207.6L515.43 209.7L515.53 225.4L515.62 220.7L515.71 217.9L515.81 209.8L515.90 214.6L515.99 211.2L516.08 218.4L516.18 213.9L516.27 214.9L516.36 213.4L516.46 204.8L516.55 210.2L516.64 222.4L516.73 217.9L516.83 221.0L516.92 223.9L517.01 218.0L517.11 213.9L517.20 218.4L517.29 216.6L517.38 212.1L517.48 219.5L517.57 224.8L517.66 203.1L517.75 205.8L517.85 220.0L517.94 208.6L518.03 209.0L518.13 218.0L518.22 204.3L518.31 203.8L518.40 215.3L518.50 211.1L518.59 210.3L518.68 213.8L518.78 207.4L518.87 205.4L518.96 221.6L519.05 211.9L519.15 209.3L519.24 206.7L519.33 215.7L519.43 223.1L519.52 217.9L519.61 223.1L519.70 222.2L519.80 216.9L519.89 220.9L519.98 214.1L520.08 209.1L520.17 215.6L520.26 215.1L520.35 201.5L520.45 216.2L520.54 223.4L520.63 222.2L520.73 215.0L520.82 218.4L520.91 213.0L521.00 205.8L521.10 218.9L521.19 223.4L521.28 226.3L521.38 208.3L521.47 224.1L521.56 204.4L521.65 210.2L521.75 223.6L521.84 218.1L521.93 202.7L522.03 211.5L522.12 213.0L522.21 210.1L522.30 201.2L522.40 227.7L522.49 213.3L522.58 221.7L522.67 207.7L522.77 205.5L522.86 207.1L522.95 222.8L523.05 218.9L523.14 219.7L523.23 221.6L523.32 207.0L523.42 212.5L523.51 212.8L523.60 217.2L523.70 204.7L523.79 203.9L523.88 225.8L523.97 224.0L524.07 216.8L524.16 220.4L524.25 208.4L524.35 215.5L524.44 210.0L524.53 207.7L524.62 212.1L524.72 208.6L524.81 217.7L524.90 220.4L525.00 220.9L525.09 215.1L525.18 212.3L525.27 221.6L525.37 214.4L525.46 205.9L525.55 217.2L525.65 220.1L525.74 224.0L525.83 216.3L525.92 221.2L526.02 220.1L526.11 212.3L526.20 202.4L526.30 225.6L526.39 209.0L526.48 208.9L526.57 204.9L526.67 223.4L526.76 208.9L526.85 211.2L526.95 209.9L527.04 206.2L527.13 207.9L527.22 212.1L527.32 221.2L527.41 213.9L527.50 204.5L527.60 201.0L527.69 210.6L527.78 215.9L527.87 226.7L527.97 221.0L528.06 202.8L528.15 205.4L528.25 208.2L528.34 210.0L528.43 206.3L528.52 207.2L528.62 222.3L528.71 222.4L528.80 210.6L528.89 223.0L528.99 198.6L529.08 211.7L529.17 200.8L529.27 213.6L529.36 222.4L529.45 218.0L529.54 225.3L529.64 199.3L529.73 212.2L529.82 208.6L529.92 225.6L530.01 202.6L530.10 210.1L530.19 217.8L530.29 211.2L530.38 216.6L530.47 219.4L530.57 210.8L530.66 210.9L530.75 219.0L530.84 211.0L530.94 205.4L531.03 220.0L531.12 209.9L531.22 202.5L531.31 213.2L531.40 215.0L531.49 208.7L531.59 209.7L531.68 203.0L531.77 215.4L531.87 220.2L531.96 211.3L532.05 202.0L532.14 219.6L532.24 208.7L532.33 204.6L532.42 219.7L532.52 224.1L532.61 204.0L532.70 220.6L532.79 215.8L532.89 221.6L532.98 205.1L533.07 212.9L533.17 218.7L533.26 208.1L533.35 213.6L533.44 221.0L533.54 211.0L533.63 218.7L533.72 209.3L533.82 207.8L533.91 216.8L534.00 221.8L534.09 223.8L534.19 206.1L534.28 213.8L534.37 224.4L534.46 208.8L534.56 208.0L534.65 214.7L534.74 209.9L534.84 211.6L534.93 223.8L535.02 215.5L535.11 217.9L535.21 221.1L535.30 210.8L535.39 220.2L535.49 219.6L535.58 204.3L535.67 204.0L535.76 210.3L535.86 213.6L535.95 222.3L536.04 219.4L536.14 209.4L536.23 218.7L536.32 212.4L536.41 198.1L536.51 204.1L536.60 204.7L536.69 207.5L536.79 205.5L536.88 203.7L536.97 219.0L537.06 216.3L537.16 217.1L537.25 203.8L537.34 228.5L537.44 206.0L537.53 225.2L537.62 221.8L537.71 199.7L537.81 227.7L537.90 225.3L537.99 220.6L538.09 209.8L538.18 222.4L538.27 210.1L538.36 201.4L538.46 225.2L538.55 207.2L538.64 217.4L538.74 207.2L538.83 226.5L538.92 226.0L539.01 220.0L539.11 204.8L539.20 208.4L539.29 218.1L539.38 205.9L539.48 209.2L539.57 215.4L539.66 222.9L539.76 224.0L539.85 220.7L539.94 213.9L540.03 219.1L540.13 217.1L540.22 213.4L540.31 207.9L540.41 211.5L540.50 221.6L540.59 217.2L540.68 223.7L540.78 215.5L540.87 214.5L540.96 222.4L541.06 220.8L541.15 219.5L541.24 223.6L541.33 219.7L541.43 210.2L541.52 205.7L541.61 210.5L541.71 221.8L541.80 216.3L541.89 214.8L541.98 227.6L542.08 202.9L542.17 209.0L542.26 222.7L542.36 206.3L542.45 211.4L542.54 217.8L542.63 199.9L542.73 214.2L542.82 219.0L542.91 205.5L543.01 205.7L543.10 215.8L543.19 202.9L543.28 220.9L543.38 207.7L543.47 218.0L543.56 216.7L543.66 206.9L543.75 203.6L543.84 222.5L543.93 212.6L544.03 208.0L544.12 223.9L544.21 223.3L544.31 210.8L544.40 217.9L544.49 217.3L544.58 221.9L544.68 202.3L544.77 214.6L544.86 208.5L544.95 217.0L545.05 220.8L545.14 224.8L545.23 202.2L545.33 212.1L545.42 216.1L545.51 222.7L545.60 214.2L545.70 205.3L545.79 205.4L545.88 206.9L545.98 216.6L546.07 210.0L546.16 203.9L546.25 204.5L546.35 206.3L546.44 199.7L546.53 201.4L546.63 217.0L546.72 208.9L546.81 215.9L546.90 204.9L547.00 222.9L547.09 215.3L547.18 218.1L547.28 221.8L547.37 224.2L547.46 210.5L547.55 208.3L547.65 215.8L547.74 205.8L547.83 217.7L547.93 221.8L548.02 207.5L548.11 216.3L548.20 207.4L548.30 202.3L548.39 205.1L548.48 223.4L548.58 217.9L548.67 215.5L548.76 216.4L548.85 212.3L548.95 222.5L549.04 220.0L549.13 201.6L549.23 213.5L549.32 223.8L549.41 219.5L549.50 220.5L549.60 206.8L549.69 205.7L549.78 209.4L549.88 221.6L549.97 209.4L550.06 206.6L550.15 206.2L550.25 202.5L550.34 214.9L550.43 214.2L550.52 212.1L550.62 203.4L550.71 219.6L550.80 221.5L550.90 220.8L550.99 219.5L551.08 209.6L551.17 211.3L551.27 208.7L551.36 215.7L551.45 200.3L551.55 220.3L551.64 203.6L551.73 212.4L551.82 219.7L551.92 213.3L552.01 220.9L552.10 206.7L552.20 216.5L552.29 215.9L552.38 202.6L552.47 221.2L552.57 203.6L552.66 215.1L552.75 225.7L552.85 207.0L552.94 208.4L553.03 203.8L553.12 214.3L553.22 223.9L553.31 220.3L553.40 230.3L553.50 220.9L553.59 225.0L553.68 218.2L553.77 217.0L553.87 207.9L553.96 219.7L554.05 203.1L554.15 213.2L554.24 201.6L554.33 205.6L554.42 216.8L554.52 205.7L554.61 209.2L554.70 217.1L554.80 213.3L554.89 204.1L554.98 216.5L555.07 210.4L555.17 207.7L555.26 213.7L555.35 202.6L555.45 221.2L555.54 222.4L555.63 210.0L555.72 213.7L555.82 223.6L555.91 211.5L556.00 214.7L556.10 206.7L556.19 206.7L556.28 217.2L556.37 225.9L556.47 217.9L556.56 222.4L556.65 216.8L556.74 211.1L556.84 205.0L556.93 210.9L557.02 200.9L557.12 216.0L557.21 206.2L557.30 210.1L557.39 225.3L557.49 221.3L557.58 221.8L557.67 227.9L557.77 213.1L557.86 210.8L557.95 205.0L558.04 212.3L558.14 219.0L558.23 213.4L558.32 201.5L558.42 215.8L558.51 221.7L558.60 213.0L558.69 202.1L558.79 223.5L558.88 203.5L558.97 202.6L559.07 218.4L559.16 202.0L559.25 224.5L559.34 212.7L559.44 215.4L559.53 213.2L559.62 207.7L559.72 222.7L559.81 215.4L559.90 218.9L559.99 205.7L560.09 204.9L560.18 220.4L560.27 205.5L560.37 221.3L560.46 210.0L560.55 210.0L560.64 208.1L560.74 209.3L560.83 213.6L560.92 219.7L561.02 211.7L561.11 215.5L561.20 215.0L561.29 214.6L561.39 220.7L561.48 213.9L561.57 204.8L561.66 205.5L561.76 205.3L561.85 211.1L561.94 224.5L562.04 219.4L562.13 212.8L562.22 206.7L562.31 226.1L562.41 205.0L562.50 211.0L562.59 201.7L562.69 210.9L562.78 224.7L562.87 213.2L562.96 215.1L563.06 203.1L563.15 225.3L563.24 212.0L563.34 216.8L563.43 223.0L563.52 207.8L563.61 205.3L563.71 215.1L563.80 220.4L563.89 211.2L563.99 206.3L564.08 215.6L564.17 220.7L564.26 219.1L564.36 212.8L564.45 224.2L564.54 221.5L564.64 214.2L564.73 212.3L564.82 217.5L564.91 220.6L565.01 221.3L565.10 216.5L565.19 218.8L565.29 214.1L565.38 209.8L565.47 218.7L565.56 206.4L565.66 220.2L565.75 212.5L565.84 213.0L565.94 215.7L566.03 219.8L566.12 204.7L566.21 207.1L566.31 224.9L566.40 219.3L566.49 206.3L566.59 219.1L566.68 210.0L566.77 216.2L566.86 209.5L566.96 204.6L567.05 221.7L567.14 220.5L567.24 215.2L567.33 226.6L567.42 215.3L567.51 219.2L567.61 219.1L567.70 208.3L567.79 222.0L567.88 206.4L567.98 207.0L568.07 204.2L568.16 212.6L568.26 214.1L568.35 205.7L568.44 210.0L568.53 206.9L568.63 211.9L568.72 223.6L568.81 217.2L568.91 204.8L569.00 204.0L569.09 222.2L569.18 224.8L569.28 207.5L569.37 202.6L569.46 225.2L569.56 210.1L569.65 205.8L569.74 208.9L569.83 204.6L569.93 218.0L570.02 203.0L570.11 203.3L570.21 218.6L570.30 210.2L570.39 221.6L570.48 202.2L570.58 218.5L570.67 215.7L570.76 214.9L570.86 222.8L570.95 214.5L571.04 218.1L571.13 206.5L571.23 223.4L571.32 216.8L571.41 205.8L571.51 215.0L571.60 213.4L571.69 217.3L571.78 202.2L571.88 209.8L571.97 217.6L572.06 205.1L572.16 217.9L572.25 220.9L572.34 227.1L572.43 219.0L572.53 212.9L572.62 217.2L572.71 219.6L572.81 200.4L572.90 207.3L572.99 203.1L573.08 225.6L573.18 220.8L573.27 215.0L573.36 209.4L573.45 215.1L573.55 209.9L573.64 215.5L573.73 207.8L573.83 205.4L573.92 206.0L574.01 218.7L574.10 207.5L574.20 218.3L574.29 217.1L574.38 223.6L574.48 220.1L574.57 225.8L574.66 207.8L574.75 206.1L574.85 224.0L574.94 215.6L575.03 205.6L575.13 222.0L575.22 223.9L575.31 221.0L575.40 210.8L575.50 219.1L575.59 220.3L575.68 207.3L575.78 215.5L575.87 221.2L575.96 220.5L576.05 212.2L576.15 225.2L576.24 208.6L576.33 204.4L576.43 211.6L576.52 213.6L576.61 204.7L576.70 221.5L576.80 220.7L576.89 208.6L576.98 205.3L577.08 210.2L577.17 219.1L577.26 215.3L577.35 207.2L577.45 212.9L577.54 202.2L577.63 222.7L577.73 221.1L577.82 205.2L577.91 218.2L578.00 206.1L578.10 205.4L578.19 214.4L578.28 219.3L578.38 215.4L578.47 225.6L578.56 204.1L578.65 208.0L578.75 216.2L578.84 221.9L578.93 204.1L579.02 221.6L579.12 215.3L579.21 208.8L579.30 203.1L579.40 219.0L579.49 217.0L579.58 211.5L579.67 205.3L579.77 213.9L579.86 214.2L579.95 216.2L580.05 222.4L580.14 217.8L580.23 215.8L580.32 218.7L580.42 213.5L580.51 207.8L580.60 205.1L580.70 210.2L580.79 218.0L580.88 207.8L580.97 217.7L581.07 226.4L581.16 218.7L581.25 224.5L581.35 212.3L581.44 208.2L581.53 202.2L581.62 219.9L581.72 218.8L581.81 201.6L581.90 206.8L582.00 204.4L582.09 214.1L582.18 205.2L582.27 225.6L582.37 202.4L582.46 214.0L582.55 210.5L582.65 221.2L582.74 217.4L582.83 217.1L582.92 207.1L583.02 208.2L583.11 202.7L583.20 221.0L583.30 221.4L583.39 217.5L583.48 210.5L583.57 223.5L583.67 203.7L583.76 205.3L583.85 212.3L583.94 225.1L584.04 212.4L584.13 206.2L584.22 224.2L584.32 221.0L584.41 202.1L584.50 224.4L584.59 208.2L584.69 212.5L584.78 224.7L584.87 214.1L584.97 212.5L585.06 206.8L585.15 205.4L585.24 213.8L585.34 217.8L585.43 210.2L585.52 208.8L585.62 218.9L585.71 206.0L585.80 210.5L585.89 226.2L585.99 217.2L586.08 215.7L586.17 216.6L586.27 217.5L586.36 213.1L586.45 205.3L586.54 217.3L586.64 216.6L586.73 204.6L586.82 212.0L586.92 207.2L587.01 209.7L587.10 202.7L587.19 215.1L587.29 217.5L587.38 219.4L587.47 216.3L587.57 206.1L587.66 209.2L587.75 208.6L587.84 226.9L587.94 218.4L588.03 202.8L588.12 219.6L588.22 209.8L588.31 206.1L588.40 212.8L588.49 210.0L588.59 219.3L588.68 203.0L588.77 219.0L588.87 206.8L588.96 206.1L589.05 203.5L589.14 206.1L589.24 225.4L589.33 210.0L589.42 222.1L589.51 215.4L589.61 206.2L589.70 211.8L589.79 214.1L589.89 213.4L589.98 207.0L590.07 213.2L590.16 224.2L590.26 223.2L590.35 212.1L590.44 223.8L590.54 203.8L590.63 210.9L590.72 208.0L590.81 207.0L590.91 205.6L591.00 216.7L591.09 204.1L591.19 217.0L591.28 216.7L591.37 221.5L591.46 223.5L591.56 223.9L591.65 211.2L591.74 213.0L591.84 227.9L591.93 218.7L592.02 221.4L592.11 205.6L592.21 220.3L592.30 211.6L592.39 223.0L592.49 215.1L592.58 214.5L592.67 229.0L592.76 222.0L592.86 214.0L592.95 221.7L593.04 212.5L593.14 217.1L593.23 215.7L593.32 201.4L593.41 204.7L593.51 202.0L593.60 205.7L593.69 208.3L593.79 203.7L593.88 215.6L593.97 222.6L594.06 224.9L594.16 214.0L594.25 214.4L594.34 224.3L594.44 203.9L594.53 210.3L594.62 218.5L594.71 203.7L594.81 205.3L594.90 205.2L594.99 224.4L595.09 208.0L595.18 216.9L595.27 210.6L595.36 207.6L595.46 209.0L595.55 216.5L595.64 224.2L595.73 218.2L595.83 214.8L595.92 224.1L596.01 215.2L596.11 220.7L596.20 218.4L596.29 204.2L596.38 219.4L596.48 209.0L596.57 213.5L596.66 219.7L596.76 203.0L596.85 213.4L596.94 208.7L597.03 208.4L597.13 215.1L597.22 220.5L597.31 209.5L597.41 202.7L597.50 205.3L597.59 201.6L597.68 214.0L597.78 219.6L597.87 210.4L597.96 218.5L598.06 211.7L598.15 213.8L598.24 211.3L598.33 224.7L598.43 219.8L598.52 213.9L598.61 205.3L598.71 216.3L598.80 223.2L598.89 222.1L598.98 218.5L599.08 213.5L599.17 210.3L599.26 204.0L599.36 205.8L599.45 219.3L599.54 205.8L599.63 214.3L599.73 221.9L599.82 213.7L599.91 203.8L600.01 203.1L600.10 219.3L600.19 217.3L600.28 210.8L600.38 212.3L600.47 217.0L600.56 224.7L600.65 215.8L600.75 224.3L600.84 213.8L600.93 225.1L601.03 207.4L601.12 204.3L601.21 221.4L601.30 205.4L601.40 209.7L601.49 220.5L601.58 209.3L601.68 214.2L601.77 203.4L601.86 206.7L601.95 209.9L602.05 221.6L602.14 222.1L602.23 217.6L602.33 218.3L602.42 212.0L602.51 202.5L602.60 201.8L602.70 217.0L602.79 210.3L602.88 211.5L602.98 206.4L603.07 208.7L603.16 205.7L603.25 205.4L603.35 205.7L603.44 209.2L603.53 215.1L603.63 218.6L603.72 211.0L603.81 217.5L603.90 210.8L604.00 205.4L604.09 216.1L604.18 215.4L604.28 223.6L604.37 213.1L604.46 208.5L604.55 205.3L604.65 222.9L604.74 211.1L604.83 212.9L604.93 211.4L605.02 217.8L605.11 220.4L605.20 217.4L605.30 202.7L605.39 210.4L605.48 224.1L605.58 221.6L605.67 213.9L605.76 225.2L605.85 214.8L605.95 206.4L606.04 201.9L606.13 203.3L606.23 205.7L606.32 208.1L606.41 217.3L606.50 213.8L606.60 217.8L606.69 219.6L606.78 211.9L606.87 226.0L606.97 204.1L607.06 201.1L607.15 216.4L607.25 205.3L607.34 206.6L607.43 220.9L607.52 222.3L607.62 219.3L607.71 209.8L607.80 209.0L607.90 220.9L607.99 222.7L608.08 219.4L608.17 211.2L608.27 220.8L608.36 214.9L608.45 219.9L608.55 217.3L608.64 203.3L608.73 206.1L608.82 214.4L608.92 216.2L609.01 218.1L609.10 222.2L609.20 219.3L609.29 217.2L609.38 218.0L609.47 215.9L609.57 204.8L609.66 214.5L609.75 222.6L609.85 215.8L609.94 209.4L610.03 206.8L610.12 203.7L610.22 223.1L610.31 205.9L610.40 221.4L610.50 211.0L610.59 200.4L610.68 210.6L610.77 214.2L610.87 221.0L610.96 207.4L611.05 214.6L611.15 208.6L611.24 203.7L611.33 201.6L611.42 204.9L611.52 210.2L611.61 212.3L611.70 208.1L611.79 206.9L611.89 203.5L611.98 210.7L612.07 210.4L612.17 213.3L612.26 205.0L612.35 221.8L612.44 225.8L612.54 216.2L612.63 222.8L612.72 212.8L612.82 218.3L612.91 228.0L613.00 206.7L613.09 205.1L613.19 223.4L613.28 212.7L613.37 210.7L613.47 215.0L613.56 201.3L613.65 217.5L613.74 220.8L613.84 220.8L613.93 216.2L614.02 207.3L614.12 213.2L614.21 209.2L614.30 216.1L614.39 207.8L614.49 207.0L614.58 221.8L614.67 204.6L614.77 209.0L614.86 216.0L614.95 212.6L615.04 219.9L615.14 217.6L615.23 213.8L615.32 220.6L615.42 210.8L615.51 212.6L615.60 201.7L615.69 202.5L615.79 213.3L615.88 213.6L615.97 205.8L616.07 217.9L616.16 218.6L616.25 223.5L616.34 216.6L616.44 210.6L616.53 217.7L616.62 219.1L616.72 224.2L616.81 205.0L616.90 211.5L616.99 218.4L617.09 212.5L617.18 213.6L617.27 205.9L617.37 213.5L617.46 218.9L617.55 211.4L617.64 209.3L617.74 205.8L617.83 218.3L617.92 208.1L618.01 211.2L618.11 213.9L618.20 204.2L618.29 201.5L618.39 213.3L618.48 217.6L618.57 205.7L618.66 217.1L618.76 211.6L618.85 223.4L618.94 212.4L619.04 204.1L619.13 202.5L619.22 205.0L619.31 205.2L619.41 219.9L619.50 203.0L619.59 205.4L619.69 212.9L619.78 204.2L619.87 204.0L619.96 224.7L620.06 207.8L620.15 204.4L620.24 210.7L620.34 222.6L620.43 218.2L620.52 214.1L620.61 200.1L620.71 202.8L620.80 220.0L620.89 216.7L620.99 224.3L621.08 226.3L621.17 214.4L621.26 217.5L621.36 209.4L621.45 214.0L621.54 208.6L621.64 218.9L621.73 212.9L621.82 211.7L621.91 212.3L622.01 201.6L622.10 205.2L622.19 204.6L622.29 208.9L622.38 223.6L622.47 206.7L622.56 206.0L622.66 211.4L622.75 208.3L622.84 211.6L622.93 205.9L623.03 207.2L623.12 214.6L623.21 221.0L623.31 225.6L623.40 226.5L623.49 203.2L623.58 214.3L623.68 217.0L623.77 197.9L623.86 204.0L623.96 223.1L624.05 221.8L624.14 204.6L624.23 208.2L624.33 221.8L624.42 219.7L624.51 223.2L624.61 217.3L624.70 214.5L624.79 216.7L624.88 209.2L624.98 219.7L625.07 218.3L625.16 218.8L625.26 201.2L625.35 212.0L625.44 208.6L625.53 205.3L625.63 225.6L625.72 218.0L625.81 204.6L625.91 202.0L626.00 210.7L626.09 207.5L626.18 222.8L626.28 207.4L626.37 222.6L626.46 207.6L626.56 220.4L626.65 208.9L626.74 214.8L626.83 202.9L626.93 223.5L627.02 208.7L627.11 204.0L627.21 202.7L627.30 216.9L627.39 204.7L627.48 206.6L627.58 200.8L627.67 224.5L627.76 221.7L627.86 218.1L627.95 209.7L628.04 216.8L628.13 214.7L628.23 214.7L628.32 212.5L628.41 209.1L628.50 215.1L628.60 201.6L628.69 221.2L628.78 219.9L628.88 216.2L628.97 213.9L629.06 200.2L629.15 209.8L629.25 213.1L629.34 220.1L629.43 225.8L629.53 224.8L629.62 216.5L629.71 222.3L629.80 221.1L629.90 219.0L629.99 205.9L630.08 212.7L630.18 214.2L630.27 221.8L630.36 209.9L630.45 216.5L630.55 208.5L630.64 226.1L630.73 210.2L630.83 207.9L630.92 217.7L631.01 215.1L631.10 213.0L631.20 215.1L631.29 222.9L631.38 214.4L631.48 210.3L631.57 206.0L631.66 213.3L631.75 221.6L631.85 224.4L631.94 217.6L632.03 224.5L632.13 208.2L632.22 204.0L632.31 214.7L632.40 222.6L632.50 221.0L632.59 220.2L632.68 203.1L632.78 224.3L632.87 206.9L632.96 216.9L633.05 205.0L633.15 216.5L633.24 213.3L633.33 203.7L633.43 221.7L633.52 201.7L633.61 210.5L633.70 217.5L633.80 204.2L633.89 202.1L633.98 222.7L634.08 205.9L634.17 222.0L634.26 211.0L634.35 215.5L634.45 222.3L634.54 207.3L634.63 222.0L634.72 202.0L634.82 201.5L634.91 207.0L635.00 216.9L635.10 220.8L635.19 206.1L635.28 203.2L635.37 207.3L635.47 212.8L635.56 214.8L635.65 205.4L635.75 221.0L635.84 213.6L635.93 216.4L636.02 204.7L636.12 211.2L636.21 204.9L636.30 204.9L636.40 213.2L636.49 212.5L636.58 216.0L636.67 214.7L636.77 210.9L636.86 214.8L636.95 221.8L637.05 222.8L637.14 213.7L637.23 214.5L637.32 222.5L637.42 211.3L637.51 214.3L637.60 203.6L637.70 221.6L637.79 219.4L637.88 215.6L637.97 219.8L638.07 216.9L638.16 213.6L638.25 220.1L638.35 222.5L638.44 213.6L638.53 213.8L638.62 221.7L638.72 210.8L638.81 209.7L638.90 221.9L639.00 216.4L639.09 212.8L639.18 223.7L639.27 213.6L639.37 211.4L639.46 222.2L639.55 226.0L639.64 223.7L639.74 202.5L639.83 209.7L639.92 210.3L640.02 202.9L640.11 217.3L640.20 217.9L640.29 223.6L640.39 211.8L640.48 208.7L640.57 204.2L640.67 211.5L640.76 210.2L640.85 205.4L640.94 217.5L641.04 204.6L641.13 213.9L641.22 208.9L641.32 208.5L641.41 222.7L641.50 209.7L641.59 212.1L641.69 219.7L641.78 227.3L641.87 224.4L641.97 211.9L642.06 217.3L642.15 213.8L642.24 205.3L642.34 220.2L642.43 223.6L642.52 217.4L642.62 209.3L642.71 214.9L642.80 210.0L642.89 201.8L642.99 213.0L643.08 223.1L643.17 208.2L643.27 208.6L643.36 217.7L643.45 215.6L643.54 208.8L643.64 210.1L643.73 205.9L643.82 209.1L643.92 224.6L644.01 216.2L644.10 213.4L644.19 209.8L644.29 212.8L644.38 208.8L644.47 220.2L644.57 216.2L644.66 219.4L644.75 201.8L644.84 208.7L644.94 211.0L645.03 213.9L645.12 225.5L645.22 207.7L645.31 214.6L645.40 210.2L645.49 220.2L645.59 208.8L645.68 220.7L645.77 221.2L645.86 211.1L645.96 220.1L646.05 220.8L646.14 222.5L646.24 214.1L646.33 209.8L646.42 213.8L646.51 218.6L646.61 225.7L646.70 216.7L646.79 220.8L646.89 212.4L646.98 223.9L647.07 221.2L647.16 217.1L647.26 222.1L647.35 204.8L647.44 210.1L647.54 210.5L647.63 201.9L647.72 209.0L647.81 203.4L647.91 208.4" stroke="#76b900" stroke-width="1.25" fill="none" stroke-linejoin="bevel"/>
<rect x="90.7" y="172.2" width="557.5" height="253.2" fill="none" stroke="#c8c8c8" stroke-width="1"/>
<line x1="87.3" y1="425.40" x2="90.7" y2="425.40" stroke="#c8c8c8" stroke-width="1"/>
<text transform="translate(79.45,428.40) scale(0.861,1)" font-size="9.5" fill="#e0e0e0">0</text>
<line x1="87.3" y1="378.88" x2="90.7" y2="378.88" stroke="#c8c8c8" stroke-width="1"/>
<text transform="translate(70.37,381.88) scale(0.861,1)" font-size="9.5" fill="#e0e0e0">100</text>
<line x1="87.3" y1="332.36" x2="90.7" y2="332.36" stroke="#c8c8c8" stroke-width="1"/>
<text transform="translate(70.37,335.36) scale(0.861,1)" font-size="9.5" fill="#e0e0e0">200</text>
<line x1="87.3" y1="285.84" x2="90.7" y2="285.84" stroke="#c8c8c8" stroke-width="1"/>
<text transform="translate(70.37,288.84) scale(0.861,1)" font-size="9.5" fill="#e0e0e0">300</text>
<line x1="87.3" y1="239.32" x2="90.7" y2="239.32" stroke="#c8c8c8" stroke-width="1"/>
<text transform="translate(70.37,242.32) scale(0.861,1)" font-size="9.5" fill="#e0e0e0">400</text>
<line x1="87.3" y1="192.80" x2="90.7" y2="192.80" stroke="#c8c8c8" stroke-width="1"/>
<text transform="translate(70.37,195.80) scale(0.861,1)" font-size="9.5" fill="#e0e0e0">500</text>
<line x1="138.40" y1="425.4" x2="138.40" y2="428.3" stroke="#c8c8c8" stroke-width="1"/>
<text transform="translate(129.49,437.60) scale(0.861,1)" font-size="9.5" fill="#e0e0e0">1300</text>
<line x1="231.20" y1="425.4" x2="231.20" y2="428.3" stroke="#c8c8c8" stroke-width="1"/>
<text transform="translate(222.29,437.60) scale(0.861,1)" font-size="9.5" fill="#e0e0e0">1400</text>
<line x1="324.00" y1="425.4" x2="324.00" y2="428.3" stroke="#c8c8c8" stroke-width="1"/>
<text transform="translate(315.09,437.60) scale(0.861,1)" font-size="9.5" fill="#e0e0e0">1500</text>
<line x1="416.80" y1="425.4" x2="416.80" y2="428.3" stroke="#c8c8c8" stroke-width="1"/>
<text transform="translate(407.89,437.60) scale(0.861,1)" font-size="9.5" fill="#e0e0e0">1600</text>
<line x1="509.60" y1="425.4" x2="509.60" y2="428.3" stroke="#c8c8c8" stroke-width="1"/>
<text transform="translate(500.69,437.60) scale(0.861,1)" font-size="9.5" fill="#e0e0e0">1700</text>
<line x1="602.40" y1="425.4" x2="602.40" y2="428.3" stroke="#c8c8c8" stroke-width="1"/>
<text transform="translate(593.49,437.60) scale(0.861,1)" font-size="9.5" fill="#e0e0e0">1800</text>
<text transform="translate(320.58,166.90) scale(0.826,1)" font-size="10.9" fill="#e0e0e0">PCI EXPRESS POWER</text>
<text transform="translate(352.92,450.00) scale(0.956,1)" font-size="9.5" fill="#e0e0e0">Time (s)</text>
<text transform="translate(64.3,320.22) rotate(-90) scale(0.949,1)" font-size="9.5" fill="#e0e0e0">Power (W)</text>
<text transform="translate(725.37,146.10) scale(0.892,1)" font-size="7.4" fill="#f4f4f4">Plot Options</text>
<rect x="723.3" y="151.00" width="40" height="12.25" fill="#c4c4c4"/>
<rect x="724.2" y="151.90" width="38.2" height="10.45" fill="#fbfbfb"/>
<text transform="translate(734.49,159.70) scale(0.815,1)" font-size="7.3" fill="#111" stroke="#111" stroke-width="0.22">10 sec</text>
<rect x="723.3" y="166.45" width="40" height="12.25" fill="#c4c4c4"/>
<rect x="724.2" y="167.35" width="38.2" height="10.45" fill="#fbfbfb"/>
<text transform="translate(736.10,175.15) scale(0.815,1)" font-size="7.3" fill="#111" stroke="#111" stroke-width="0.22">1 min</text>
<rect x="723.3" y="181.90" width="40" height="12.25" fill="#c4c4c4"/>
<rect x="724.2" y="182.80" width="38.2" height="10.45" fill="#fbfbfb"/>
<text transform="translate(734.45,190.60) scale(0.815,1)" font-size="7.3" fill="#111" stroke="#111" stroke-width="0.22">10 min</text>
<rect x="723.3" y="197.35" width="40" height="12.25" fill="#c4c4c4"/>
<rect x="724.2" y="198.25" width="38.2" height="10.45" fill="#fbfbfb"/>
<text transform="translate(734.79,206.05) scale(0.815,1)" font-size="7.3" fill="#111" stroke="#111" stroke-width="0.22">1 hour</text>
<rect x="723.3" y="212.80" width="40" height="12.25" fill="#c4c4c4"/>
<rect x="724.2" y="213.70" width="38.2" height="10.45" fill="#fbfbfb"/>
<text transform="translate(737.57,221.50) scale(0.815,1)" font-size="7.3" fill="#111" stroke="#111" stroke-width="0.22">Max</text>
<rect x="723.1" y="229.0" width="6.8" height="6.8" rx="1.3" fill="#0a64c2"/>
<path d="M724.7 232.5L726 233.8L728.4 231.2" fill="none" stroke="#fff" stroke-width="0.8"/>
<text transform="translate(732.80,234.90) scale(0.893,1)" font-size="7.4" fill="#f4f4f4">Auto scroll</text>
<rect x="723.1" y="240.1" width="6.8" height="6.8" rx="1.3" fill="#0a64c2"/>
<path d="M724.7 243.6L726 244.9L728.4 242.29999999999998" fill="none" stroke="#fff" stroke-width="0.8"/>
<text transform="translate(732.80,246.00) scale(0.841,1)" font-size="7.4" fill="#f4f4f4">Auto scale</text>
<path d="M724.7 357.5H722.5V454.5H764.5V357.5H751.8" fill="none" stroke="#8e8e8e" stroke-width="1"/>
<text transform="translate(725.40,358.90) scale(0.850,1)" font-size="7.3" fill="#e2e2e2">Plot Data</text>
<rect x="723" y="360.8" width="41" height="13.35" fill="#76b900"/>
<rect x="726.4" y="365.0" width="5.6" height="5.6" fill="#ffffff"/>
<path d="M726.4 370.6V365.0H732" fill="none" stroke="#555" stroke-width="0.9"/>
<path d="M727.5 367.8L728.8 369.3L731.2 366.2" fill="none" stroke="#000" stroke-width="1"/>
<text transform="translate(735.89,370.10) scale(0.774,1)" font-size="7.3" fill="#1c1c1c" stroke="#111" stroke-width="0.22">TOTAL</text>
<rect x="723" y="374.1" width="41" height="13.35" fill="#8dd3c7"/>
<rect x="726.4" y="378.3" width="5.6" height="5.6" fill="#ffffff"/>
<path d="M726.4 383.9V378.3H732" fill="none" stroke="#555" stroke-width="0.9"/>
<text transform="translate(735.58,383.40) scale(0.774,1)" font-size="7.3" fill="#1c1c1c" stroke="#111" stroke-width="0.22">12V 8P1</text>
<rect x="723" y="387.4" width="41" height="13.35" fill="#ffffb3"/>
<rect x="726.4" y="391.6" width="5.6" height="5.6" fill="#ffffff"/>
<path d="M726.4 397.2V391.6H732" fill="none" stroke="#555" stroke-width="0.9"/>
<text transform="translate(735.58,396.70) scale(0.774,1)" font-size="7.3" fill="#1c1c1c" stroke="#111" stroke-width="0.22">12V 8P2</text>
<rect x="723" y="400.7" width="41" height="13.35" fill="#bebada"/>
<rect x="726.4" y="404.9" width="5.6" height="5.6" fill="#ffffff"/>
<path d="M726.4 410.5V404.9H732" fill="none" stroke="#555" stroke-width="0.9"/>
<text transform="translate(735.58,410.00) scale(0.774,1)" font-size="7.3" fill="#1c1c1c" stroke="#111" stroke-width="0.22">12V 8P3</text>
<rect x="723" y="414.0" width="41" height="13.35" fill="#fb8072"/>
<rect x="726.4" y="418.2" width="5.6" height="5.6" fill="#ffffff"/>
<path d="M726.4 423.8V418.2H732" fill="none" stroke="#555" stroke-width="0.9"/>
<text transform="translate(735.58,423.30) scale(0.774,1)" font-size="7.3" fill="#1c1c1c" stroke="#111" stroke-width="0.22">12V PCIE</text>
<rect x="723" y="427.3" width="41" height="13.35" fill="#80b1d3"/>
<rect x="726.4" y="431.5" width="5.6" height="5.6" fill="#ffffff"/>
<path d="M726.4 437.1V431.5H732" fill="none" stroke="#555" stroke-width="0.9"/>
<text transform="translate(735.77,436.60) scale(0.774,1)" font-size="7.3" fill="#1c1c1c" stroke="#111" stroke-width="0.22">3.3V</text>
<rect x="723" y="440.6" width="41" height="13.35" fill="#fdb462"/>
<rect x="726.4" y="444.8" width="5.6" height="5.6" fill="#ffffff"/>
<path d="M726.4 450.4V444.8H732" fill="none" stroke="#555" stroke-width="0.9"/>
<text transform="translate(735.77,449.90) scale(0.774,1)" font-size="7.3" fill="#1c1c1c" stroke="#111" stroke-width="0.22">3.3V AUX</text>
<rect x="718.5" y="460" width="48.6" height="1" fill="#1e1e1e"/>
<text transform="translate(6.71,469.10) scale(0.836,1)" font-size="7.4" fill="#f0f0f0">PCAT 800 connected, FW v0.8</text>
<line x1="671" y1="462" x2="671" y2="471" stroke="#6a6a6a" stroke-width="1"/>
<line x1="672" y1="462" x2="672" y2="471" stroke="#161616" stroke-width="1"/>
<line x1="710.4" y1="462" x2="710.4" y2="471" stroke="#6a6a6a" stroke-width="1"/>
<line x1="711.4" y1="462" x2="711.4" y2="471" stroke="#161616" stroke-width="1"/>
<text transform="translate(677.35,469.10) scale(0.849,1)" font-size="7.4" fill="#f0f0f0">dt: 100ms</text>
<text transform="translate(717.50,469.10) scale(0.837,1)" font-size="7.4" fill="#f0f0f0">Data Backlog: 0</text>
</svg>
</body></html>
